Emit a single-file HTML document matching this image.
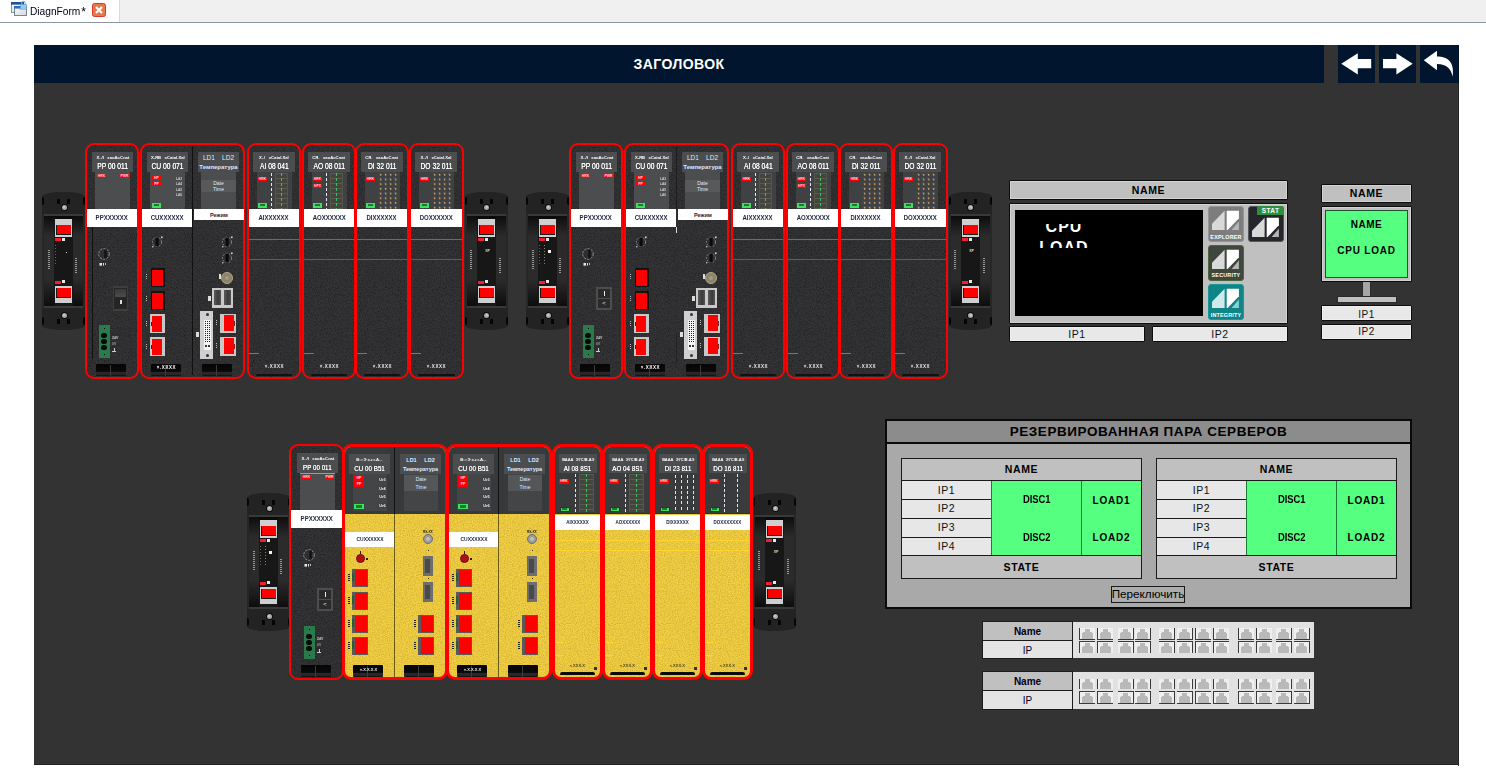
<!DOCTYPE html>
<html><head><meta charset="utf-8"><title>DiagnForm</title>
<style>
html,body{margin:0;padding:0;}
body{width:1486px;height:776px;position:relative;overflow:hidden;background:#fff;
font-family:"Liberation Sans",sans-serif;}
div{position:absolute;box-sizing:border-box;}
svg{position:absolute;overflow:visible;}
span{white-space:nowrap;}
</style></head><body>
<div style="left:0px;top:0px;width:1486px;height:22px;background:#f0f0f0;"></div>
<div style="left:0px;top:22px;width:1486px;height:1px;background:#8f979e;"></div>
<div style="left:0px;top:0px;width:119px;height:22px;background:#ffffff;"></div>
<div style="left:119px;top:0px;width:1px;height:22px;background:#d9d9d9;"></div>
<svg style="left:10px;top:1px" width="18" height="16" viewBox="0 0 18 16">
<defs><linearGradient id="wg" x1="0" y1="0" x2="1" y2="1"><stop offset="0" stop-color="#ffffff"/><stop offset="1" stop-color="#cfd6dc"/></linearGradient></defs>
<rect x="1.5" y="1.5" width="12" height="10" fill="url(#wg)" stroke="#8a939c" stroke-width="1"/>
<rect x="1" y="1" width="13" height="2.6" fill="#1b4f9c"/>
<rect x="4.5" y="5.5" width="12" height="9" fill="url(#wg)" stroke="#7b858f" stroke-width="1"/>
<rect x="4" y="5" width="13" height="2.6" fill="#2a6fc0"/>
<path d="M11.7 4 L11.7 2 Q11.7 0.3 13.4 0.3 Q15.1 0.3 15.1 2 L15.1 4" fill="none" stroke="#7fb4dc" stroke-width="1.1"/>
<rect x="10.6" y="3.6" width="5.8" height="4.6" fill="#9acbec" stroke="#5f9dcb" stroke-width="0.6"/>
</svg>
<div style="left:30px;top:1px;width:62px;height:20px;line-height:20px;font-size:11px;color:#000014;text-align:left;white-space:nowrap;"><span style="display:inline-block;transform:scaleX(0.925);transform-origin:0 50%;">DiagnForm<span style="font-size:13px;position:relative;top:0.5px;margin-left:1px">*</span></span></div>
<svg style="left:92px;top:3px" width="14" height="14" viewBox="0 0 14 14">
<rect x="0.5" y="0.5" width="13" height="13" rx="2" fill="#e4794a" stroke="#d9392b" stroke-width="1"/>
<path d="M4 4 L10 10 M10 4 L4 10" stroke="#fff" stroke-width="2.2" stroke-linecap="butt"/>
</svg>
<div style="left:34px;top:45px;width:1425px;height:720px;background:#333333;"></div>
<div style="left:1458px;top:45px;width:1px;height:721px;background:#242424;"></div>
<div style="left:34px;top:764px;width:1425px;height:1px;background:#242424;"></div>
<div style="left:34px;top:45px;width:1290px;height:38px;background:#01162e;"></div>
<div style="left:34px;top:45px;width:1290px;height:38px;line-height:38px;font-size:14px;color:#fff;text-align:center;white-space:nowrap;font-weight:bold;letter-spacing:0.45px;">ЗАГОЛОВОК</div>
<div style="left:1338px;top:45px;width:37px;height:38px;background:#01162e;"></div>
<div style="left:1379px;top:45px;width:37px;height:38px;background:#01162e;"></div>
<div style="left:1420px;top:45px;width:39px;height:38px;background:#01162e;"></div>
<svg style="left:1338px;top:45px" width="37" height="38" viewBox="0 0 37 38">
<path d="M3.3 18.8 L19.8 8.2 L19.8 13.9 L33.2 13.9 L33.2 23.3 L19.8 23.3 L19.8 29.4 Z" fill="#fff"/></svg>
<svg style="left:1379px;top:45px" width="37" height="38" viewBox="0 0 37 38">
<path d="M33.7 18.8 L17.4 8.2 L17.4 13.9 L4 13.9 L4 23.3 L17.4 23.3 L17.4 29.4 Z" fill="#fff"/></svg>
<svg style="left:1420px;top:45px" width="39" height="38" viewBox="0 0 39 38">
<path d="M3.8 15.3 L17 5.8 L17 11.5 C27 11.5 34.8 16 32.7 31.8 C31 24 27 19 17 19 L17 25.2 Z" fill="#fff"/></svg>
<svg width="0" height="0" style="left:0;top:0"><defs><filter id="nz" x="0" y="0" width="100%" height="100%"><feTurbulence type="fractalNoise" baseFrequency="0.85" numOctaves="2" seed="7"/><feColorMatrix type="matrix" values="0 0 0 0 0  0 0 0 0 0  0 0 0 0 0  0.9 0 0 0 -0.37"/></filter><filter id="nzy" x="0" y="0" width="100%" height="100%"><feTurbulence type="fractalNoise" baseFrequency="0.85" numOctaves="2" seed="11"/><feColorMatrix type="matrix" values="0 0 0 0 0  0 0 0 0 0  0 0 0 0 0  0.32 0 0 0 -0.12"/></filter></defs></svg>
<div style="left:42px;top:192px;width:43px;height:138px;background:#272727;border-radius:21px 21px 21px 21px / 5px 5px 5px 5px;"></div>
<div style="left:42px;top:192px;width:43px;height:22px;background:#232323;border-radius:21px 21px 0 0 / 5px 5px 0 0;"></div>
<div style="left:42px;top:308px;width:43px;height:22px;background:#232323;border-radius:0 0 21px 21px / 0 0 5px 5px;"></div>
<div style="left:44px;top:214px;width:39px;height:2px;background:#393939;"></div>
<div style="left:44px;top:306px;width:39px;height:2px;background:#393939;"></div>
<div style="left:44px;top:216px;width:10px;height:90px;background:linear-gradient(#0d0d0d 0,#2b2b2b 22%,#2b2b2b 70%,#0d0d0d 100%);"></div>
<div style="left:73px;top:216px;width:10px;height:90px;background:linear-gradient(#0d0d0d 0,#2b2b2b 22%,#2b2b2b 70%,#0d0d0d 100%);"></div>
<div style="left:54px;top:216px;width:19px;height:90px;background:#171717;"></div>
<div style="left:54px;top:216px;width:19px;height:3px;background:#0a0a0a;"></div>
<div style="left:42px;top:197px;width:2px;height:8px;background:#050505;border-radius:0 2px 2px 0;"></div>
<div style="left:83px;top:197px;width:2px;height:8px;background:#050505;border-radius:2px 0 0 2px;"></div>
<div style="left:42px;top:317px;width:2px;height:8px;background:#050505;border-radius:0 2px 2px 0;"></div>
<div style="left:83px;top:317px;width:2px;height:8px;background:#050505;border-radius:2px 0 0 2px;"></div>
<div style="left:57px;top:199px;width:3px;height:5px;background:#050505;"></div>
<div style="left:67px;top:199px;width:3px;height:5px;background:#050505;"></div>
<div style="left:57px;top:319px;width:3px;height:5px;background:#050505;"></div>
<div style="left:67px;top:319px;width:3px;height:5px;background:#050505;"></div>
<div style="left:60.5px;top:203.5px;width:7px;height:7px;background:#0c0c0c;border-radius:3.5px;"></div>
<div style="left:61.5px;top:204.5px;width:5px;height:5px;background:#aeaaac;border-radius:2.5px;"></div>
<div style="left:63px;top:205.5px;width:2px;height:2px;background:#d0cccf;border-radius:1px;"></div>
<div style="left:60.5px;top:311.5px;width:7px;height:7px;background:#0c0c0c;border-radius:3.5px;"></div>
<div style="left:61.5px;top:312.5px;width:5px;height:5px;background:#aeaaac;border-radius:2.5px;"></div>
<div style="left:63px;top:313.5px;width:2px;height:2px;background:#d0cccf;border-radius:1px;"></div>
<div style="left:55px;top:219px;width:17px;height:18px;background:#cfcfd1;"></div>
<div style="left:56px;top:225px;width:15px;height:10px;background:#1a1a1a;"></div>
<div style="left:57px;top:225px;width:14px;height:9px;background:#ff0000;"></div>
<div style="left:55px;top:286px;width:17px;height:17px;background:#cfcfd1;"></div>
<div style="left:56px;top:288px;width:15px;height:10px;background:#1a1a1a;"></div>
<div style="left:57px;top:288px;width:14px;height:9px;background:#ff0000;"></div>
<div style="left:55px;top:238px;width:6px;height:3px;background:#f02030;"></div>
<div style="left:62px;top:238px;width:3px;height:3px;background:#e8e8e8;"></div>
<div style="left:55px;top:281px;width:6px;height:3px;background:#f02030;"></div>
<div style="left:62px;top:280px;width:3px;height:3px;background:#e8e8e8;"></div>
<div style="left:48px;top:250px;width:2px;height:20px;background:repeating-linear-gradient(#9a9a9a 0 1px,transparent 1px 2px);"></div>
<div style="left:75px;top:258px;width:2px;height:16px;background:repeating-linear-gradient(#9a9a9a 0 1px,transparent 1px 2px);"></div>
<div style="left:55px;top:245px;width:1px;height:20px;background:repeating-linear-gradient(#6f6a58 0 1px,transparent 1px 3px);"></div>
<div style="left:66px;top:252px;width:1px;height:1px;background:#ddd;"></div>
<div style="left:85px;top:143px;width:54px;height:236px;background:#343436;border:2px solid #ff0000;border-radius:9px;overflow:hidden;"><svg style="left:0;top:0" width="50" height="232"><rect width="50" height="232" filter="url(#nz)"/></svg></div>
<div style="left:92px;top:152px;width:41px;height:20px;background:#4b4d4f;"></div>
<div style="left:92px;top:155px;width:41px;height:5px;line-height:5px;text-align:center;white-space:nowrap;font-size:8.4px;font-weight:bold;color:#ffffff;letter-spacing:0px;"><span style="display:inline-block;transform:scale(0.5);transform-origin:50% 50%;margin:0 -100px;">Х../l &nbsp; хаоАсСлаt</span></div>
<div style="left:88px;top:161px;width:49px;height:11px;line-height:11px;font-size:8.6px;color:#fff;text-align:center;white-space:nowrap;text-shadow:0 0 0.4px #fff;"><span style="display:inline-block;transform:scaleX(0.78);transform-origin:50% 50%;">PP 00 011</span></div>
<div style="left:95px;top:172px;width:35px;height:37px;background:#4b4d4f;"></div>
<div style="left:97px;top:174px;width:9px;height:4px;background:#ff0000;"></div>
<div style="left:97px;top:174px;width:9px;height:4px;line-height:4px;font-size:3.5px;color:#ffd0e0;text-align:center;white-space:nowrap;font-weight:bold;">HRK</div>
<div style="left:120px;top:174px;width:9px;height:4px;background:#ff0000;"></div>
<div style="left:120px;top:174px;width:9px;height:4px;line-height:4px;font-size:3.5px;color:#ffd0e0;text-align:center;white-space:nowrap;font-weight:bold;">PWR</div>
<div style="left:87px;top:209px;width:50px;height:18px;background:#ffffff;"></div>
<div style="left:87px;top:209px;width:50px;height:18px;line-height:18px;font-size:7px;color:#1c2340;text-align:center;white-space:nowrap;font-weight:bold;"><span style="display:inline-block;transform:scaleX(0.86);transform-origin:50% 50%;">PPXXXXXX</span></div>
<div style="left:92px;top:227px;width:1px;height:132px;background:#111;"></div>
<svg style="left:96px;top:246px" width="16" height="20" viewBox="0 0 16 20"><circle cx="8" cy="8" r="5.3" fill="none" stroke="#a8a8a8" stroke-width="0.8" stroke-dasharray="2.2 1.2"/><rect x="8.3" y="3.5" width="2.4" height="9" rx="1" fill="#111"/><rect x="3.5" y="17" width="2.5" height="2.6" fill="#e8e8e8"/><rect x="7" y="17" width="1" height="2.6" fill="#ddd"/><rect x="9" y="17" width="1" height="2" fill="#bbb"/></svg>
<div style="left:113px;top:286px;width:15px;height:25px;background:#262626;border:1px solid #3c3c3c;border-top:2px solid #3e3e3e;border-bottom:2px solid #3e3e3e;"></div>
<div style="left:115px;top:289px;width:11px;height:8px;background:linear-gradient(#3a3a3a,#4c4c4c);"></div>
<div style="left:115px;top:298px;width:11px;height:9px;background:#242424;"></div>
<div style="left:120px;top:300px;width:2px;height:4px;background:#ddd;"></div>
<div style="left:99px;top:325px;width:11px;height:33px;background:#2b7a4b;"></div>
<div style="left:101px;top:333px;width:6px;height:5px;background:#0a0a0a;border-radius:3px;"></div>
<div style="left:101px;top:339px;width:6px;height:5px;background:#0a0a0a;border-radius:3px;"></div>
<div style="left:101px;top:345px;width:6px;height:5px;background:#0a0a0a;border-radius:3px;"></div>
<div style="left:104px;top:328px;width:1px;height:1px;background:#0a0a0a;"></div>
<div style="left:104px;top:354px;width:1px;height:1px;background:#0a0a0a;"></div>
<div style="left:112px;top:335px;width:8px;height:5px;line-height:5px;text-align:left;white-space:nowrap;font-size:7.0px;font-weight:bold;color:#ccc;letter-spacing:0px;"><span style="display:inline-block;transform:scale(0.5);transform-origin:0 50%;">24V</span></div>
<div style="left:112px;top:341px;width:8px;height:5px;line-height:5px;text-align:left;white-space:nowrap;font-size:7.0px;font-weight:bold;color:#999;letter-spacing:0px;"><span style="display:inline-block;transform:scale(0.5);transform-origin:0 50%;">0V</span></div>
<div style="left:112px;top:351px;width:4px;height:1px;background:#ccc;"></div>
<div style="left:113.5px;top:348px;width:1px;height:3px;background:#ccc;"></div>
<div style="left:96px;top:364px;width:30px;height:12px;background:linear-gradient(#050505 0,#0a0a0a 62%,#2a2a2a 70%,#242424 90%,#0a0a0a 100%);border-radius:1px;"></div>
<div style="left:110px;top:365px;width:1px;height:11px;background:#3c3c3c;"></div>
<div style="left:140px;top:143px;width:105px;height:236px;background:#343436;border:2px solid #ff0000;border-radius:9px;overflow:hidden;"><svg style="left:0;top:0" width="101" height="232"><rect width="101" height="232" filter="url(#nz)"/></svg></div>
<div style="left:192px;top:147px;width:1px;height:228px;background:#111;"></div>
<div style="left:147px;top:152px;width:41px;height:20px;background:#4b4d4f;"></div>
<div style="left:147px;top:155px;width:41px;height:5px;line-height:5px;text-align:center;white-space:nowrap;font-size:8.4px;font-weight:bold;color:#ffffff;letter-spacing:0px;"><span style="display:inline-block;transform:scale(0.5);transform-origin:50% 50%;margin:0 -100px;">Х-ЯВ &nbsp; хСаtаl.Хаl</span></div>
<div style="left:143px;top:161px;width:49px;height:11px;line-height:11px;font-size:8.6px;color:#fff;text-align:center;white-space:nowrap;text-shadow:0 0 0.4px #fff;"><span style="display:inline-block;transform:scaleX(0.78);transform-origin:50% 50%;">CU 00 071</span></div>
<div style="left:150px;top:172px;width:35px;height:37px;background:#4b4d4f;"></div>
<div style="left:152px;top:176px;width:9px;height:4px;background:#ff0000;"></div>
<div style="left:152px;top:176px;width:9px;height:4px;line-height:4px;font-size:3.5px;color:#ffd0e0;text-align:center;white-space:nowrap;font-weight:bold;">HP</div>
<div style="left:152px;top:182px;width:9px;height:4px;background:#ff0000;"></div>
<div style="left:152px;top:182px;width:9px;height:4px;line-height:4px;font-size:3.5px;color:#ffd0e0;text-align:center;white-space:nowrap;font-weight:bold;">PP</div>
<div style="left:152px;top:203px;width:9px;height:5px;background:#3fe060;"></div>
<div style="left:154px;top:204px;width:5px;height:2px;background:#1a7a30;"></div>
<div style="left:174px;top:176px;width:10px;height:5px;line-height:5px;text-align:center;white-space:nowrap;font-size:6.4px;font-weight:bold;color:#d0d0d0;letter-spacing:0px;"><span style="display:inline-block;transform:scale(0.5);transform-origin:50% 50%;margin:0 -100px;">LA3</span></div>
<div style="left:174px;top:181px;width:10px;height:5px;line-height:5px;text-align:center;white-space:nowrap;font-size:6.4px;font-weight:bold;color:#d0d0d0;letter-spacing:0px;"><span style="display:inline-block;transform:scale(0.5);transform-origin:50% 50%;margin:0 -100px;">LA4</span></div>
<div style="left:174px;top:187px;width:10px;height:5px;line-height:5px;text-align:center;white-space:nowrap;font-size:6.4px;font-weight:bold;color:#d0d0d0;letter-spacing:0px;"><span style="display:inline-block;transform:scale(0.5);transform-origin:50% 50%;margin:0 -100px;">LA5</span></div>
<div style="left:174px;top:192px;width:10px;height:5px;line-height:5px;text-align:center;white-space:nowrap;font-size:6.4px;font-weight:bold;color:#d0d0d0;letter-spacing:0px;"><span style="display:inline-block;transform:scale(0.5);transform-origin:50% 50%;margin:0 -100px;">LA6</span></div>
<div style="left:142px;top:209px;width:50px;height:18px;background:#ffffff;"></div>
<div style="left:142px;top:209px;width:50px;height:18px;line-height:18px;font-size:7px;color:#1c2340;text-align:center;white-space:nowrap;font-weight:bold;"><span style="display:inline-block;transform:scaleX(0.86);transform-origin:50% 50%;">CUXXXXXX</span></div>
<div style="left:198px;top:152px;width:41px;height:20px;background:#4b4d4f;"></div>
<div style="left:198px;top:153px;width:41px;height:9px;line-height:9px;font-size:6.5px;color:#dfe8ff;text-align:center;white-space:nowrap;">LD1 &nbsp;&nbsp; LD2</div>
<div style="left:196px;top:163px;width:45px;height:9px;line-height:9px;font-size:6px;color:#dfe8ff;text-align:center;white-space:nowrap;font-weight:bold;"><span style="display:inline-block;transform:scaleX(1.0);transform-origin:50% 50%;">Температура</span></div>
<div style="left:201px;top:172px;width:35px;height:37px;background:#4b4d4f;"></div>
<div style="left:201px;top:180px;width:35px;height:12px;background:#57595b;"></div>
<div style="left:201px;top:180px;width:35px;height:6px;line-height:6px;font-size:5px;color:#dfe8ff;text-align:center;white-space:nowrap;">Date</div>
<div style="left:201px;top:186px;width:35px;height:6px;line-height:6px;font-size:5px;color:#dfe8ff;text-align:center;white-space:nowrap;">Time</div>
<div style="left:194px;top:209px;width:50px;height:11px;background:#fff;"></div>
<div style="left:194px;top:210px;width:50px;height:11px;line-height:11px;font-size:5.5px;color:#1c2340;text-align:center;white-space:nowrap;font-weight:bold;">Режим</div>
<svg style="left:150px;top:235px" width="14" height="14" viewBox="0 0 14 14"><circle cx="7" cy="7" r="4.6" fill="none" stroke="#9a9a9a" stroke-width="0.8" stroke-dasharray="2 1.3"/><rect x="5.6" y="2.6" width="3" height="8.8" rx="1" fill="#0a0a0a"/><rect x="11" y="1.5" width="1.6" height="1.6" fill="#ddd"/><rect x="2" y="11" width="1.4" height="1.4" fill="#bbb"/></svg>
<div style="left:151px;top:268px;width:14px;height:19px;background:#121212;"></div>
<div style="left:152px;top:270px;width:11px;height:16px;background:#ff0000;"></div>
<div style="left:151px;top:291px;width:14px;height:19px;background:#121212;"></div>
<div style="left:152px;top:293px;width:11px;height:16px;background:#ff0000;"></div>
<div style="left:150px;top:314px;width:15px;height:19px;background:#c8c8c8;"></div>
<div style="left:152px;top:316px;width:10px;height:16px;background:#ff0000;"></div>
<div style="left:151px;top:322px;width:1px;height:4px;background:#2a2a2a;"></div>
<div style="left:150px;top:337px;width:15px;height:19px;background:#c8c8c8;"></div>
<div style="left:152px;top:339px;width:10px;height:16px;background:#ff0000;"></div>
<div style="left:151px;top:345px;width:1px;height:4px;background:#2a2a2a;"></div>
<div style="left:146px;top:274px;width:1px;height:5px;background:repeating-linear-gradient(#bbb 0 1px,transparent 1px 2px);"></div>
<div style="left:146px;top:296px;width:1px;height:5px;background:repeating-linear-gradient(#bbb 0 1px,transparent 1px 2px);"></div>
<div style="left:146px;top:321px;width:1px;height:5px;background:repeating-linear-gradient(#bbb 0 1px,transparent 1px 2px);"></div>
<div style="left:146px;top:344px;width:1px;height:5px;background:repeating-linear-gradient(#bbb 0 1px,transparent 1px 2px);"></div>
<div style="left:151px;top:364px;width:30px;height:12px;background:linear-gradient(#050505 0,#0a0a0a 62%,#2a2a2a 70%,#242424 90%,#0a0a0a 100%);border-radius:1px;"></div>
<div style="left:165px;top:365px;width:1px;height:11px;background:#3c3c3c;"></div>
<div style="left:151px;top:365px;width:30px;height:5px;line-height:5px;text-align:center;white-space:nowrap;font-size:9.0px;font-weight:bold;color:#fff;letter-spacing:1.2px;"><span style="display:inline-block;transform:scale(0.5);transform-origin:50% 50%;margin:0 -100px;">×.XXXX</span></div>
<svg style="left:220px;top:235px" width="14" height="14" viewBox="0 0 14 14"><circle cx="7" cy="7" r="4.6" fill="none" stroke="#9a9a9a" stroke-width="0.8" stroke-dasharray="2 1.3"/><rect x="5.6" y="2.6" width="3" height="8.8" rx="1" fill="#0a0a0a"/><rect x="11" y="1.5" width="1.6" height="1.6" fill="#ddd"/><rect x="2" y="11" width="1.4" height="1.4" fill="#bbb"/></svg>
<svg style="left:220px;top:251px" width="14" height="14" viewBox="0 0 14 14"><circle cx="7" cy="7" r="4.6" fill="none" stroke="#9a9a9a" stroke-width="0.8" stroke-dasharray="2 1.3"/><rect x="5.6" y="2.6" width="3" height="8.8" rx="1" fill="#0a0a0a"/><rect x="11" y="1.5" width="1.6" height="1.6" fill="#ddd"/><rect x="2" y="11" width="1.4" height="1.4" fill="#bbb"/></svg>
<div style="left:221px;top:272px;width:12px;height:12px;background:#8c8468;border-radius:6px;border:1.5px solid #b3a77f;"></div>
<div style="left:225px;top:276px;width:4px;height:4px;background:#9a9a9a;border-radius:2px;"></div>
<div style="left:219px;top:274px;width:2px;height:5px;background:#ddd;"></div>
<div style="left:212px;top:288px;width:21px;height:20px;background:#c9c9c9;"></div>
<div style="left:214px;top:290px;width:7px;height:15px;background:linear-gradient(90deg,#5a5a5a,#3a3a3a 60%,#555);"></div>
<div style="left:224px;top:290px;width:7px;height:15px;background:linear-gradient(90deg,#5a5a5a,#3a3a3a 60%,#555);"></div>
<div style="left:208px;top:296px;width:3px;height:5px;background:#ddd;"></div>
<div style="left:200px;top:311px;width:13px;height:48px;background:#cfcfcf;"></div>
<div style="left:204px;top:320px;width:7px;height:30px;background:#f4f4f4;border-radius:1px;"></div>
<div style="left:205px;top:321px;width:5px;height:22px;background:repeating-linear-gradient(#222 0 1px,transparent 1px 2px);-webkit-mask:repeating-linear-gradient(90deg,#000 0 1px,transparent 1px 2px);mask:repeating-linear-gradient(90deg,#000 0 1px,transparent 1px 2px);"></div>
<div style="left:205px;top:345px;width:2px;height:2px;background:#333;"></div>
<div style="left:208px;top:345px;width:2px;height:2px;background:#333;"></div>
<div style="left:206px;top:313px;width:3px;height:3px;background:#333;border-radius:2px;"></div>
<div style="left:206px;top:354px;width:3px;height:3px;background:#333;border-radius:2px;"></div>
<div style="left:196px;top:332px;width:3px;height:5px;background:#ddd;"></div>
<div style="left:220px;top:314px;width:16px;height:19px;background:#c8c8c8;"></div>
<div style="left:224px;top:315px;width:10px;height:16px;background:#ff0000;"></div>
<div style="left:234px;top:321px;width:1px;height:5px;background:#802020;"></div>
<div style="left:220px;top:337px;width:16px;height:19px;background:#c8c8c8;"></div>
<div style="left:224px;top:338px;width:10px;height:16px;background:#ff0000;"></div>
<div style="left:234px;top:344px;width:1px;height:5px;background:#802020;"></div>
<div style="left:216px;top:320px;width:1px;height:6px;background:repeating-linear-gradient(#bbb 0 1px,transparent 1px 2px);"></div>
<div style="left:216px;top:343px;width:1px;height:6px;background:repeating-linear-gradient(#bbb 0 1px,transparent 1px 2px);"></div>
<div style="left:202px;top:364px;width:30px;height:12px;background:linear-gradient(#050505 0,#0a0a0a 62%,#2a2a2a 70%,#242424 90%,#0a0a0a 100%);border-radius:1px;"></div>
<div style="left:216px;top:365px;width:1px;height:11px;background:#3c3c3c;"></div>
<div style="left:247px;top:143px;width:54px;height:236px;background:#343436;border:2px solid #ff0000;border-radius:9px;overflow:hidden;"><svg style="left:0;top:0" width="50" height="232"><rect width="50" height="232" filter="url(#nz)"/></svg></div>
<div style="left:253px;top:152px;width:42px;height:20px;background:#4b4d4f;"></div>
<div style="left:253px;top:155px;width:42px;height:5px;line-height:5px;text-align:center;white-space:nowrap;font-size:8.4px;font-weight:bold;color:#ffffff;letter-spacing:0px;"><span style="display:inline-block;transform:scale(0.5);transform-origin:50% 50%;margin:0 -100px;">Х../ &nbsp; хСаtаl.Хаl</span></div>
<div style="left:249px;top:161px;width:50px;height:11px;line-height:11px;font-size:8.6px;color:#fff;text-align:center;white-space:nowrap;text-shadow:0 0 0.4px #fff;"><span style="display:inline-block;transform:scaleX(0.78);transform-origin:50% 50%;">AI 08 041</span></div>
<div style="left:257px;top:172px;width:35px;height:37px;background:#3f4142;"></div>
<div style="left:258px;top:177px;width:9px;height:4px;background:#ff0000;"></div>
<div style="left:258px;top:177px;width:9px;height:4px;line-height:4px;font-size:3.5px;color:#ffd0e0;text-align:center;white-space:nowrap;font-weight:bold;">HRK</div>
<div style="left:258px;top:203px;width:9px;height:5px;background:#3fe060;"></div>
<div style="left:260px;top:204px;width:5px;height:2px;background:#1a7a30;"></div>
<div style="left:271px;top:173px;width:1px;height:36px;background:repeating-linear-gradient(#e6e6f4 0 3px,transparent 3px 5px);"></div>
<div style="left:275px;top:173px;width:13px;height:36px;border-left:1px solid #55554a;border-right:1px solid #55554a;background:repeating-linear-gradient(#5a5a4e 0 1px,#44453e 1px 5px);"></div>
<div style="left:281px;top:173px;width:1px;height:36px;background:repeating-linear-gradient(#3fc060 0 3px,transparent 3px 5px);"></div>
<div style="left:249px;top:209px;width:50px;height:18px;background:#ffffff;"></div>
<div style="left:249px;top:209px;width:50px;height:18px;line-height:18px;font-size:7px;color:#1c2340;text-align:center;white-space:nowrap;font-weight:bold;"><span style="display:inline-block;transform:scaleX(0.86);transform-origin:50% 50%;">AIXXXXXX</span></div>
<div style="left:249px;top:239px;width:50px;height:1px;background:#6c6c6c;"></div>
<div style="left:249px;top:259px;width:50px;height:1px;background:#5c5c5c;"></div>
<div style="left:249px;top:353px;width:10px;height:1px;background:#777;"></div>
<div style="left:257px;top:364px;width:34px;height:5px;line-height:5px;text-align:center;white-space:nowrap;font-size:9.0px;font-weight:bold;color:#e8e8e8;letter-spacing:1.2px;"><span style="display:inline-block;transform:scale(0.5);transform-origin:50% 50%;margin:0 -100px;">×.XXXX</span></div>
<div style="left:256px;top:374px;width:36px;height:2px;background:#111;border-radius:2px;"></div>
<div style="left:302px;top:143px;width:54px;height:236px;background:#343436;border:2px solid #ff0000;border-radius:9px;overflow:hidden;"><svg style="left:0;top:0" width="50" height="232"><rect width="50" height="232" filter="url(#nz)"/></svg></div>
<div style="left:308px;top:152px;width:42px;height:20px;background:#4b4d4f;"></div>
<div style="left:308px;top:155px;width:42px;height:5px;line-height:5px;text-align:center;white-space:nowrap;font-size:8.4px;font-weight:bold;color:#ffffff;letter-spacing:0px;"><span style="display:inline-block;transform:scale(0.5);transform-origin:50% 50%;margin:0 -100px;">СЯ. &nbsp; хаоАсСлаt</span></div>
<div style="left:304px;top:161px;width:50px;height:11px;line-height:11px;font-size:8.6px;color:#fff;text-align:center;white-space:nowrap;text-shadow:0 0 0.4px #fff;"><span style="display:inline-block;transform:scaleX(0.78);transform-origin:50% 50%;">AO 08 011</span></div>
<div style="left:312px;top:172px;width:35px;height:37px;background:#3f4142;"></div>
<div style="left:313px;top:177px;width:9px;height:4px;background:#ff0000;"></div>
<div style="left:313px;top:177px;width:9px;height:4px;line-height:4px;font-size:3.5px;color:#ffd0e0;text-align:center;white-space:nowrap;font-weight:bold;">HRK</div>
<div style="left:313px;top:184px;width:9px;height:4px;background:#ff0000;"></div>
<div style="left:313px;top:184px;width:9px;height:4px;line-height:4px;font-size:3.5px;color:#ffd0e0;text-align:center;white-space:nowrap;font-weight:bold;">HPX</div>
<div style="left:313px;top:203px;width:9px;height:5px;background:#3fe060;"></div>
<div style="left:315px;top:204px;width:5px;height:2px;background:#1a7a30;"></div>
<div style="left:326px;top:173px;width:1px;height:36px;background:repeating-linear-gradient(#e6e6f4 0 3px,transparent 3px 5px);"></div>
<div style="left:330px;top:173px;width:13px;height:36px;border-left:1px solid #55554a;border-right:1px solid #55554a;background:repeating-linear-gradient(#5a5a4e 0 1px,#44453e 1px 5px);"></div>
<div style="left:336px;top:173px;width:1px;height:36px;background:repeating-linear-gradient(#3fc060 0 3px,transparent 3px 5px);"></div>
<div style="left:304px;top:209px;width:50px;height:18px;background:#ffffff;"></div>
<div style="left:304px;top:209px;width:50px;height:18px;line-height:18px;font-size:7px;color:#1c2340;text-align:center;white-space:nowrap;font-weight:bold;"><span style="display:inline-block;transform:scaleX(0.86);transform-origin:50% 50%;">AOXXXXXX</span></div>
<div style="left:304px;top:239px;width:50px;height:1px;background:#6c6c6c;"></div>
<div style="left:304px;top:259px;width:50px;height:1px;background:#5c5c5c;"></div>
<div style="left:304px;top:353px;width:10px;height:1px;background:#777;"></div>
<div style="left:312px;top:364px;width:34px;height:5px;line-height:5px;text-align:center;white-space:nowrap;font-size:9.0px;font-weight:bold;color:#e8e8e8;letter-spacing:1.2px;"><span style="display:inline-block;transform:scale(0.5);transform-origin:50% 50%;margin:0 -100px;">×.XXXX</span></div>
<div style="left:311px;top:374px;width:36px;height:2px;background:#111;border-radius:2px;"></div>
<div style="left:355px;top:143px;width:54px;height:236px;background:#343436;border:2px solid #ff0000;border-radius:9px;overflow:hidden;"><svg style="left:0;top:0" width="50" height="232"><rect width="50" height="232" filter="url(#nz)"/></svg></div>
<div style="left:361px;top:152px;width:42px;height:20px;background:#4b4d4f;"></div>
<div style="left:361px;top:155px;width:42px;height:5px;line-height:5px;text-align:center;white-space:nowrap;font-size:8.4px;font-weight:bold;color:#ffffff;letter-spacing:0px;"><span style="display:inline-block;transform:scale(0.5);transform-origin:50% 50%;margin:0 -100px;">СЯ. &nbsp; хаоАсСлаt</span></div>
<div style="left:357px;top:161px;width:50px;height:11px;line-height:11px;font-size:8.6px;color:#fff;text-align:center;white-space:nowrap;text-shadow:0 0 0.4px #fff;"><span style="display:inline-block;transform:scaleX(0.78);transform-origin:50% 50%;">DI 32 011</span></div>
<div style="left:365px;top:172px;width:35px;height:37px;background:#3f4142;"></div>
<div style="left:366px;top:177px;width:9px;height:4px;background:#ff0000;"></div>
<div style="left:366px;top:177px;width:9px;height:4px;line-height:4px;font-size:3.5px;color:#ffd0e0;text-align:center;white-space:nowrap;font-weight:bold;">HRK</div>
<div style="left:366px;top:203px;width:9px;height:5px;background:#3fe060;"></div>
<div style="left:368px;top:204px;width:5px;height:2px;background:#1a7a30;"></div>
<svg style="left:379px;top:173px" width="20" height="37" viewBox="0 0 20 37"><defs><pattern id="dots355_143" width="5" height="4.7" patternUnits="userSpaceOnUse"><rect x="1" y="1" width="1.4" height="1.6" fill="#dca24c"/><rect x="0.6" y="0.6" width="0.8" height="0.8" fill="#7f9fe0"/></pattern></defs><rect x="0" y="0" width="20" height="36" fill="url(#dots355_143)"/></svg>
<div style="left:357px;top:209px;width:50px;height:18px;background:#ffffff;"></div>
<div style="left:357px;top:209px;width:50px;height:18px;line-height:18px;font-size:7px;color:#1c2340;text-align:center;white-space:nowrap;font-weight:bold;"><span style="display:inline-block;transform:scaleX(0.86);transform-origin:50% 50%;">DIXXXXXX</span></div>
<div style="left:357px;top:239px;width:50px;height:1px;background:#6c6c6c;"></div>
<div style="left:357px;top:259px;width:50px;height:1px;background:#5c5c5c;"></div>
<div style="left:357px;top:353px;width:10px;height:1px;background:#777;"></div>
<div style="left:365px;top:364px;width:34px;height:5px;line-height:5px;text-align:center;white-space:nowrap;font-size:9.0px;font-weight:bold;color:#e8e8e8;letter-spacing:1.2px;"><span style="display:inline-block;transform:scale(0.5);transform-origin:50% 50%;margin:0 -100px;">×.XXXX</span></div>
<div style="left:364px;top:374px;width:36px;height:2px;background:#111;border-radius:2px;"></div>
<div style="left:409px;top:143px;width:55px;height:236px;background:#343436;border:2px solid #ff0000;border-radius:9px;overflow:hidden;"><svg style="left:0;top:0" width="51" height="232"><rect width="51" height="232" filter="url(#nz)"/></svg></div>
<div style="left:415px;top:152px;width:42px;height:20px;background:#4b4d4f;"></div>
<div style="left:415px;top:155px;width:42px;height:5px;line-height:5px;text-align:center;white-space:nowrap;font-size:8.4px;font-weight:bold;color:#ffffff;letter-spacing:0px;"><span style="display:inline-block;transform:scale(0.5);transform-origin:50% 50%;margin:0 -100px;">Х../l &nbsp; хСаtаl.Хаl</span></div>
<div style="left:411px;top:161px;width:50px;height:11px;line-height:11px;font-size:8.6px;color:#fff;text-align:center;white-space:nowrap;text-shadow:0 0 0.4px #fff;"><span style="display:inline-block;transform:scaleX(0.78);transform-origin:50% 50%;">DO 32 011</span></div>
<div style="left:419px;top:172px;width:35px;height:37px;background:#3f4142;"></div>
<div style="left:420px;top:177px;width:9px;height:4px;background:#ff0000;"></div>
<div style="left:420px;top:177px;width:9px;height:4px;line-height:4px;font-size:3.5px;color:#ffd0e0;text-align:center;white-space:nowrap;font-weight:bold;">HRK</div>
<div style="left:420px;top:203px;width:9px;height:5px;background:#3fe060;"></div>
<div style="left:422px;top:204px;width:5px;height:2px;background:#1a7a30;"></div>
<svg style="left:433px;top:173px" width="20" height="37" viewBox="0 0 20 37"><defs><pattern id="dots409_143" width="5" height="4.7" patternUnits="userSpaceOnUse"><rect x="1" y="1" width="1.4" height="1.6" fill="#dca24c"/><rect x="0.6" y="0.6" width="0.8" height="0.8" fill="#7f9fe0"/></pattern></defs><rect x="0" y="0" width="20" height="36" fill="url(#dots409_143)"/></svg>
<div style="left:411px;top:209px;width:51px;height:18px;background:#ffffff;"></div>
<div style="left:411px;top:209px;width:51px;height:18px;line-height:18px;font-size:7px;color:#1c2340;text-align:center;white-space:nowrap;font-weight:bold;"><span style="display:inline-block;transform:scaleX(0.86);transform-origin:50% 50%;">DOXXXXXX</span></div>
<div style="left:411px;top:239px;width:51px;height:1px;background:#6c6c6c;"></div>
<div style="left:411px;top:259px;width:51px;height:1px;background:#5c5c5c;"></div>
<div style="left:411px;top:353px;width:10px;height:1px;background:#777;"></div>
<div style="left:419px;top:364px;width:34px;height:5px;line-height:5px;text-align:center;white-space:nowrap;font-size:9.0px;font-weight:bold;color:#e8e8e8;letter-spacing:1.2px;"><span style="display:inline-block;transform:scale(0.5);transform-origin:50% 50%;margin:0 -100px;">×.XXXX</span></div>
<div style="left:418px;top:374px;width:37px;height:2px;background:#111;border-radius:2px;"></div>
<div style="left:464.5px;top:192px;width:43px;height:138px;background:#272727;border-radius:21px 21px 21px 21px / 5px 5px 5px 5px;"></div>
<div style="left:464.5px;top:192px;width:43px;height:22px;background:#232323;border-radius:21px 21px 0 0 / 5px 5px 0 0;"></div>
<div style="left:464.5px;top:308px;width:43px;height:22px;background:#232323;border-radius:0 0 21px 21px / 0 0 5px 5px;"></div>
<div style="left:466.5px;top:214px;width:39px;height:2px;background:#393939;"></div>
<div style="left:466.5px;top:306px;width:39px;height:2px;background:#393939;"></div>
<div style="left:466.5px;top:216px;width:10px;height:90px;background:linear-gradient(#0d0d0d 0,#2b2b2b 22%,#2b2b2b 70%,#0d0d0d 100%);"></div>
<div style="left:495.5px;top:216px;width:10px;height:90px;background:linear-gradient(#0d0d0d 0,#2b2b2b 22%,#2b2b2b 70%,#0d0d0d 100%);"></div>
<div style="left:476.5px;top:216px;width:19px;height:90px;background:#171717;"></div>
<div style="left:476.5px;top:216px;width:19px;height:3px;background:#0a0a0a;"></div>
<div style="left:464.5px;top:197px;width:2px;height:8px;background:#050505;border-radius:0 2px 2px 0;"></div>
<div style="left:505.5px;top:197px;width:2px;height:8px;background:#050505;border-radius:2px 0 0 2px;"></div>
<div style="left:464.5px;top:317px;width:2px;height:8px;background:#050505;border-radius:0 2px 2px 0;"></div>
<div style="left:505.5px;top:317px;width:2px;height:8px;background:#050505;border-radius:2px 0 0 2px;"></div>
<div style="left:479.5px;top:199px;width:3px;height:5px;background:#050505;"></div>
<div style="left:489.5px;top:199px;width:3px;height:5px;background:#050505;"></div>
<div style="left:479.5px;top:319px;width:3px;height:5px;background:#050505;"></div>
<div style="left:489.5px;top:319px;width:3px;height:5px;background:#050505;"></div>
<div style="left:483.0px;top:203.5px;width:7px;height:7px;background:#0c0c0c;border-radius:3.5px;"></div>
<div style="left:484.0px;top:204.5px;width:5px;height:5px;background:#aeaaac;border-radius:2.5px;"></div>
<div style="left:485.5px;top:205.5px;width:2px;height:2px;background:#d0cccf;border-radius:1px;"></div>
<div style="left:483.0px;top:311.5px;width:7px;height:7px;background:#0c0c0c;border-radius:3.5px;"></div>
<div style="left:484.0px;top:312.5px;width:5px;height:5px;background:#aeaaac;border-radius:2.5px;"></div>
<div style="left:485.5px;top:313.5px;width:2px;height:2px;background:#d0cccf;border-radius:1px;"></div>
<div style="left:477.5px;top:219px;width:17px;height:18px;background:#cfcfd1;"></div>
<div style="left:478.5px;top:225px;width:15px;height:10px;background:#1a1a1a;"></div>
<div style="left:479.5px;top:225px;width:14px;height:9px;background:#ff0000;"></div>
<div style="left:477.5px;top:286px;width:17px;height:17px;background:#cfcfd1;"></div>
<div style="left:478.5px;top:288px;width:15px;height:10px;background:#1a1a1a;"></div>
<div style="left:479.5px;top:288px;width:14px;height:9px;background:#ff0000;"></div>
<div style="left:477.5px;top:238px;width:6px;height:3px;background:#f02030;"></div>
<div style="left:484.5px;top:238px;width:3px;height:3px;background:#e8e8e8;"></div>
<div style="left:477.5px;top:281px;width:6px;height:3px;background:#f02030;"></div>
<div style="left:484.5px;top:280px;width:3px;height:3px;background:#e8e8e8;"></div>
<div style="left:469.5px;top:250px;width:2px;height:20px;background:repeating-linear-gradient(#9a9a9a 0 1px,transparent 1px 2px);"></div>
<div style="left:498.5px;top:258px;width:2px;height:16px;background:repeating-linear-gradient(#9a9a9a 0 1px,transparent 1px 2px);"></div>
<div style="left:482.5px;top:249px;width:10px;height:5px;line-height:5px;font-size:3.5px;color:#ddd;text-align:center;white-space:nowrap;font-weight:bold;">XP</div>
<div style="left:526px;top:192px;width:43px;height:138px;background:#272727;border-radius:21px 21px 21px 21px / 5px 5px 5px 5px;"></div>
<div style="left:526px;top:192px;width:43px;height:22px;background:#232323;border-radius:21px 21px 0 0 / 5px 5px 0 0;"></div>
<div style="left:526px;top:308px;width:43px;height:22px;background:#232323;border-radius:0 0 21px 21px / 0 0 5px 5px;"></div>
<div style="left:528px;top:214px;width:39px;height:2px;background:#393939;"></div>
<div style="left:528px;top:306px;width:39px;height:2px;background:#393939;"></div>
<div style="left:528px;top:216px;width:10px;height:90px;background:linear-gradient(#0d0d0d 0,#2b2b2b 22%,#2b2b2b 70%,#0d0d0d 100%);"></div>
<div style="left:557px;top:216px;width:10px;height:90px;background:linear-gradient(#0d0d0d 0,#2b2b2b 22%,#2b2b2b 70%,#0d0d0d 100%);"></div>
<div style="left:538px;top:216px;width:19px;height:90px;background:#171717;"></div>
<div style="left:538px;top:216px;width:19px;height:3px;background:#0a0a0a;"></div>
<div style="left:526px;top:197px;width:2px;height:8px;background:#050505;border-radius:0 2px 2px 0;"></div>
<div style="left:567px;top:197px;width:2px;height:8px;background:#050505;border-radius:2px 0 0 2px;"></div>
<div style="left:526px;top:317px;width:2px;height:8px;background:#050505;border-radius:0 2px 2px 0;"></div>
<div style="left:567px;top:317px;width:2px;height:8px;background:#050505;border-radius:2px 0 0 2px;"></div>
<div style="left:541px;top:199px;width:3px;height:5px;background:#050505;"></div>
<div style="left:551px;top:199px;width:3px;height:5px;background:#050505;"></div>
<div style="left:541px;top:319px;width:3px;height:5px;background:#050505;"></div>
<div style="left:551px;top:319px;width:3px;height:5px;background:#050505;"></div>
<div style="left:544.5px;top:203.5px;width:7px;height:7px;background:#0c0c0c;border-radius:3.5px;"></div>
<div style="left:545.5px;top:204.5px;width:5px;height:5px;background:#aeaaac;border-radius:2.5px;"></div>
<div style="left:547px;top:205.5px;width:2px;height:2px;background:#d0cccf;border-radius:1px;"></div>
<div style="left:544.5px;top:311.5px;width:7px;height:7px;background:#0c0c0c;border-radius:3.5px;"></div>
<div style="left:545.5px;top:312.5px;width:5px;height:5px;background:#aeaaac;border-radius:2.5px;"></div>
<div style="left:547px;top:313.5px;width:2px;height:2px;background:#d0cccf;border-radius:1px;"></div>
<div style="left:539px;top:219px;width:17px;height:18px;background:#cfcfd1;"></div>
<div style="left:540px;top:225px;width:15px;height:10px;background:#1a1a1a;"></div>
<div style="left:541px;top:225px;width:14px;height:9px;background:#ff0000;"></div>
<div style="left:539px;top:286px;width:17px;height:17px;background:#cfcfd1;"></div>
<div style="left:540px;top:288px;width:15px;height:10px;background:#1a1a1a;"></div>
<div style="left:541px;top:288px;width:14px;height:9px;background:#ff0000;"></div>
<div style="left:539px;top:238px;width:6px;height:3px;background:#f02030;"></div>
<div style="left:546px;top:238px;width:3px;height:3px;background:#e8e8e8;"></div>
<div style="left:539px;top:281px;width:6px;height:3px;background:#f02030;"></div>
<div style="left:546px;top:280px;width:3px;height:3px;background:#e8e8e8;"></div>
<div style="left:532px;top:250px;width:2px;height:20px;background:repeating-linear-gradient(#9a9a9a 0 1px,transparent 1px 2px);"></div>
<div style="left:559px;top:258px;width:2px;height:16px;background:repeating-linear-gradient(#9a9a9a 0 1px,transparent 1px 2px);"></div>
<div style="left:539px;top:245px;width:1px;height:20px;background:repeating-linear-gradient(#6f6a58 0 1px,transparent 1px 3px);"></div>
<div style="left:548px;top:250px;width:3px;height:3px;background:#f4f4f4;"></div>
<div style="left:544px;top:245px;width:1px;height:20px;background:repeating-linear-gradient(#8a8468 0 1px,transparent 1px 3px);"></div>
<div style="left:569px;top:143px;width:54px;height:236px;background:#343436;border:2px solid #ff0000;border-radius:9px;overflow:hidden;"><svg style="left:0;top:0" width="50" height="232"><rect width="50" height="232" filter="url(#nz)"/></svg></div>
<div style="left:576px;top:152px;width:41px;height:20px;background:#4b4d4f;"></div>
<div style="left:576px;top:155px;width:41px;height:5px;line-height:5px;text-align:center;white-space:nowrap;font-size:8.4px;font-weight:bold;color:#ffffff;letter-spacing:0px;"><span style="display:inline-block;transform:scale(0.5);transform-origin:50% 50%;margin:0 -100px;">Х../l &nbsp; хаоАсСлаt</span></div>
<div style="left:572px;top:161px;width:49px;height:11px;line-height:11px;font-size:8.6px;color:#fff;text-align:center;white-space:nowrap;text-shadow:0 0 0.4px #fff;"><span style="display:inline-block;transform:scaleX(0.78);transform-origin:50% 50%;">PP 00 011</span></div>
<div style="left:579px;top:172px;width:35px;height:37px;background:#4b4d4f;"></div>
<div style="left:581px;top:174px;width:9px;height:4px;background:#ff0000;"></div>
<div style="left:581px;top:174px;width:9px;height:4px;line-height:4px;font-size:3.5px;color:#ffd0e0;text-align:center;white-space:nowrap;font-weight:bold;">HRK</div>
<div style="left:604px;top:174px;width:9px;height:4px;background:#ff0000;"></div>
<div style="left:604px;top:174px;width:9px;height:4px;line-height:4px;font-size:3.5px;color:#ffd0e0;text-align:center;white-space:nowrap;font-weight:bold;">PWR</div>
<div style="left:571px;top:209px;width:50px;height:18px;background:#ffffff;"></div>
<div style="left:571px;top:209px;width:50px;height:18px;line-height:18px;font-size:7px;color:#1c2340;text-align:center;white-space:nowrap;font-weight:bold;"><span style="display:inline-block;transform:scaleX(0.86);transform-origin:50% 50%;">PPXXXXXX</span></div>
<svg style="left:580px;top:246px" width="16" height="20" viewBox="0 0 16 20"><circle cx="8" cy="8" r="5.3" fill="none" stroke="#a8a8a8" stroke-width="0.8" stroke-dasharray="2.2 1.2"/><rect x="8.3" y="3.5" width="2.4" height="9" rx="1" fill="#111"/><rect x="3.5" y="17" width="2.5" height="2.6" fill="#e8e8e8"/><rect x="7" y="17" width="1" height="2.6" fill="#ddd"/><rect x="9" y="17" width="1" height="2" fill="#bbb"/></svg>
<div style="left:596px;top:287px;width:16px;height:23px;background:#2a2a2a;border:2px solid #4d4d4d;"></div>
<div style="left:598px;top:298px;width:12px;height:1px;background:#4d4d4d;"></div>
<div style="left:604px;top:291px;width:1px;height:5px;background:#e8e8e8;"></div>
<div style="left:599px;top:300px;width:10px;height:7px;line-height:7px;font-size:6px;color:#e8e8e8;text-align:center;white-space:nowrap;">&lt;</div>
<div style="left:583px;top:325px;width:11px;height:33px;background:#2b7a4b;"></div>
<div style="left:585px;top:333px;width:6px;height:5px;background:#0a0a0a;border-radius:3px;"></div>
<div style="left:585px;top:339px;width:6px;height:5px;background:#0a0a0a;border-radius:3px;"></div>
<div style="left:585px;top:345px;width:6px;height:5px;background:#0a0a0a;border-radius:3px;"></div>
<div style="left:588px;top:328px;width:1px;height:1px;background:#0a0a0a;"></div>
<div style="left:588px;top:354px;width:1px;height:1px;background:#0a0a0a;"></div>
<div style="left:596px;top:335px;width:8px;height:5px;line-height:5px;text-align:left;white-space:nowrap;font-size:7.0px;font-weight:bold;color:#ccc;letter-spacing:0px;"><span style="display:inline-block;transform:scale(0.5);transform-origin:0 50%;">24V</span></div>
<div style="left:596px;top:341px;width:8px;height:5px;line-height:5px;text-align:left;white-space:nowrap;font-size:7.0px;font-weight:bold;color:#999;letter-spacing:0px;"><span style="display:inline-block;transform:scale(0.5);transform-origin:0 50%;">0V</span></div>
<div style="left:596px;top:351px;width:4px;height:1px;background:#ccc;"></div>
<div style="left:597.5px;top:348px;width:1px;height:3px;background:#ccc;"></div>
<div style="left:580px;top:364px;width:30px;height:12px;background:linear-gradient(#050505 0,#0a0a0a 62%,#2a2a2a 70%,#242424 90%,#0a0a0a 100%);border-radius:1px;"></div>
<div style="left:594px;top:365px;width:1px;height:11px;background:#3c3c3c;"></div>
<div style="left:624px;top:143px;width:105px;height:236px;background:#343436;border:2px solid #ff0000;border-radius:9px;overflow:hidden;"><svg style="left:0;top:0" width="101" height="232"><rect width="101" height="232" filter="url(#nz)"/></svg></div>
<div style="left:676px;top:147px;width:1px;height:62px;background:#1c1c1c;"></div>
<div style="left:676px;top:227px;width:1px;height:6px;background:#ddd;"></div>
<div style="left:676px;top:333px;width:1px;height:30px;background:#222;"></div>
<div style="left:631px;top:152px;width:41px;height:20px;background:#4b4d4f;"></div>
<div style="left:631px;top:155px;width:41px;height:5px;line-height:5px;text-align:center;white-space:nowrap;font-size:8.4px;font-weight:bold;color:#ffffff;letter-spacing:0px;"><span style="display:inline-block;transform:scale(0.5);transform-origin:50% 50%;margin:0 -100px;">Х-ЯВ &nbsp; хСаtаl.Хаl</span></div>
<div style="left:627px;top:161px;width:49px;height:11px;line-height:11px;font-size:8.6px;color:#fff;text-align:center;white-space:nowrap;text-shadow:0 0 0.4px #fff;"><span style="display:inline-block;transform:scaleX(0.78);transform-origin:50% 50%;">CU 00 071</span></div>
<div style="left:634px;top:172px;width:35px;height:37px;background:#4b4d4f;"></div>
<div style="left:636px;top:176px;width:9px;height:4px;background:#ff0000;"></div>
<div style="left:636px;top:176px;width:9px;height:4px;line-height:4px;font-size:3.5px;color:#ffd0e0;text-align:center;white-space:nowrap;font-weight:bold;">HP</div>
<div style="left:636px;top:182px;width:9px;height:4px;background:#ff0000;"></div>
<div style="left:636px;top:182px;width:9px;height:4px;line-height:4px;font-size:3.5px;color:#ffd0e0;text-align:center;white-space:nowrap;font-weight:bold;">PP</div>
<div style="left:636px;top:203px;width:9px;height:5px;background:#3fe060;"></div>
<div style="left:638px;top:204px;width:5px;height:2px;background:#1a7a30;"></div>
<div style="left:658px;top:176px;width:10px;height:5px;line-height:5px;text-align:center;white-space:nowrap;font-size:6.4px;font-weight:bold;color:#d0d0d0;letter-spacing:0px;"><span style="display:inline-block;transform:scale(0.5);transform-origin:50% 50%;margin:0 -100px;">LA3</span></div>
<div style="left:658px;top:181px;width:10px;height:5px;line-height:5px;text-align:center;white-space:nowrap;font-size:6.4px;font-weight:bold;color:#d0d0d0;letter-spacing:0px;"><span style="display:inline-block;transform:scale(0.5);transform-origin:50% 50%;margin:0 -100px;">LA4</span></div>
<div style="left:658px;top:187px;width:10px;height:5px;line-height:5px;text-align:center;white-space:nowrap;font-size:6.4px;font-weight:bold;color:#d0d0d0;letter-spacing:0px;"><span style="display:inline-block;transform:scale(0.5);transform-origin:50% 50%;margin:0 -100px;">LA5</span></div>
<div style="left:658px;top:192px;width:10px;height:5px;line-height:5px;text-align:center;white-space:nowrap;font-size:6.4px;font-weight:bold;color:#d0d0d0;letter-spacing:0px;"><span style="display:inline-block;transform:scale(0.5);transform-origin:50% 50%;margin:0 -100px;">LA6</span></div>
<div style="left:626px;top:209px;width:50px;height:18px;background:#ffffff;"></div>
<div style="left:626px;top:209px;width:50px;height:18px;line-height:18px;font-size:7px;color:#1c2340;text-align:center;white-space:nowrap;font-weight:bold;"><span style="display:inline-block;transform:scaleX(0.86);transform-origin:50% 50%;">CUXXXXXX</span></div>
<div style="left:682px;top:152px;width:41px;height:20px;background:#4b4d4f;"></div>
<div style="left:682px;top:153px;width:41px;height:9px;line-height:9px;font-size:6.5px;color:#dfe8ff;text-align:center;white-space:nowrap;">LD1 &nbsp;&nbsp; LD2</div>
<div style="left:680px;top:163px;width:45px;height:9px;line-height:9px;font-size:6px;color:#dfe8ff;text-align:center;white-space:nowrap;font-weight:bold;"><span style="display:inline-block;transform:scaleX(1.0);transform-origin:50% 50%;">Температура</span></div>
<div style="left:685px;top:172px;width:35px;height:37px;background:#4b4d4f;"></div>
<div style="left:685px;top:180px;width:35px;height:12px;background:#57595b;"></div>
<div style="left:685px;top:180px;width:35px;height:6px;line-height:6px;font-size:5px;color:#dfe8ff;text-align:center;white-space:nowrap;">Date</div>
<div style="left:685px;top:186px;width:35px;height:6px;line-height:6px;font-size:5px;color:#dfe8ff;text-align:center;white-space:nowrap;">Time</div>
<div style="left:678px;top:209px;width:50px;height:11px;background:#fff;"></div>
<div style="left:678px;top:210px;width:50px;height:11px;line-height:11px;font-size:5.5px;color:#1c2340;text-align:center;white-space:nowrap;font-weight:bold;">Режим</div>
<svg style="left:634px;top:235px" width="14" height="14" viewBox="0 0 14 14"><circle cx="7" cy="7" r="4.6" fill="none" stroke="#9a9a9a" stroke-width="0.8" stroke-dasharray="2 1.3"/><rect x="5.6" y="2.6" width="3" height="8.8" rx="1" fill="#0a0a0a"/><rect x="11" y="1.5" width="1.6" height="1.6" fill="#ddd"/><rect x="2" y="11" width="1.4" height="1.4" fill="#bbb"/></svg>
<div style="left:635px;top:268px;width:14px;height:19px;background:#121212;"></div>
<div style="left:636px;top:270px;width:11px;height:16px;background:#ff0000;"></div>
<div style="left:635px;top:291px;width:14px;height:19px;background:#121212;"></div>
<div style="left:636px;top:293px;width:11px;height:16px;background:#ff0000;"></div>
<div style="left:634px;top:314px;width:15px;height:19px;background:#c8c8c8;"></div>
<div style="left:636px;top:316px;width:10px;height:16px;background:#ff0000;"></div>
<div style="left:635px;top:322px;width:1px;height:4px;background:#2a2a2a;"></div>
<div style="left:634px;top:337px;width:15px;height:19px;background:#c8c8c8;"></div>
<div style="left:636px;top:339px;width:10px;height:16px;background:#ff0000;"></div>
<div style="left:635px;top:345px;width:1px;height:4px;background:#2a2a2a;"></div>
<div style="left:630px;top:274px;width:1px;height:5px;background:repeating-linear-gradient(#bbb 0 1px,transparent 1px 2px);"></div>
<div style="left:630px;top:296px;width:1px;height:5px;background:repeating-linear-gradient(#bbb 0 1px,transparent 1px 2px);"></div>
<div style="left:630px;top:321px;width:1px;height:5px;background:repeating-linear-gradient(#bbb 0 1px,transparent 1px 2px);"></div>
<div style="left:630px;top:344px;width:1px;height:5px;background:repeating-linear-gradient(#bbb 0 1px,transparent 1px 2px);"></div>
<div style="left:635px;top:364px;width:30px;height:12px;background:linear-gradient(#050505 0,#0a0a0a 62%,#2a2a2a 70%,#242424 90%,#0a0a0a 100%);border-radius:1px;"></div>
<div style="left:649px;top:365px;width:1px;height:11px;background:#3c3c3c;"></div>
<div style="left:635px;top:365px;width:30px;height:5px;line-height:5px;text-align:center;white-space:nowrap;font-size:9.0px;font-weight:bold;color:#fff;letter-spacing:1.2px;"><span style="display:inline-block;transform:scale(0.5);transform-origin:50% 50%;margin:0 -100px;">×.XXXX</span></div>
<svg style="left:704px;top:235px" width="14" height="14" viewBox="0 0 14 14"><circle cx="7" cy="7" r="4.6" fill="none" stroke="#9a9a9a" stroke-width="0.8" stroke-dasharray="2 1.3"/><rect x="5.6" y="2.6" width="3" height="8.8" rx="1" fill="#0a0a0a"/><rect x="11" y="1.5" width="1.6" height="1.6" fill="#ddd"/><rect x="2" y="11" width="1.4" height="1.4" fill="#bbb"/></svg>
<svg style="left:704px;top:251px" width="14" height="14" viewBox="0 0 14 14"><circle cx="7" cy="7" r="4.6" fill="none" stroke="#9a9a9a" stroke-width="0.8" stroke-dasharray="2 1.3"/><rect x="5.6" y="2.6" width="3" height="8.8" rx="1" fill="#0a0a0a"/><rect x="11" y="1.5" width="1.6" height="1.6" fill="#ddd"/><rect x="2" y="11" width="1.4" height="1.4" fill="#bbb"/></svg>
<div style="left:705px;top:272px;width:12px;height:12px;background:#8c8468;border-radius:6px;border:1.5px solid #b3a77f;"></div>
<div style="left:709px;top:276px;width:4px;height:4px;background:#9a9a9a;border-radius:2px;"></div>
<div style="left:703px;top:274px;width:2px;height:5px;background:#ddd;"></div>
<div style="left:696px;top:288px;width:21px;height:20px;background:#c9c9c9;"></div>
<div style="left:698px;top:290px;width:7px;height:15px;background:linear-gradient(90deg,#5a5a5a,#3a3a3a 60%,#555);"></div>
<div style="left:708px;top:290px;width:7px;height:15px;background:linear-gradient(90deg,#5a5a5a,#3a3a3a 60%,#555);"></div>
<div style="left:692px;top:296px;width:3px;height:5px;background:#ddd;"></div>
<div style="left:684px;top:311px;width:13px;height:48px;background:#cfcfcf;"></div>
<div style="left:688px;top:320px;width:7px;height:30px;background:#f4f4f4;border-radius:1px;"></div>
<div style="left:689px;top:321px;width:5px;height:22px;background:repeating-linear-gradient(#222 0 1px,transparent 1px 2px);-webkit-mask:repeating-linear-gradient(90deg,#000 0 1px,transparent 1px 2px);mask:repeating-linear-gradient(90deg,#000 0 1px,transparent 1px 2px);"></div>
<div style="left:689px;top:345px;width:2px;height:2px;background:#333;"></div>
<div style="left:692px;top:345px;width:2px;height:2px;background:#333;"></div>
<div style="left:690px;top:313px;width:3px;height:3px;background:#333;border-radius:2px;"></div>
<div style="left:690px;top:354px;width:3px;height:3px;background:#333;border-radius:2px;"></div>
<div style="left:680px;top:332px;width:3px;height:5px;background:#ddd;"></div>
<div style="left:704px;top:314px;width:16px;height:19px;background:#c8c8c8;"></div>
<div style="left:708px;top:315px;width:10px;height:16px;background:#ff0000;"></div>
<div style="left:718px;top:321px;width:1px;height:5px;background:#802020;"></div>
<div style="left:704px;top:337px;width:16px;height:19px;background:#c8c8c8;"></div>
<div style="left:708px;top:338px;width:10px;height:16px;background:#ff0000;"></div>
<div style="left:718px;top:344px;width:1px;height:5px;background:#802020;"></div>
<div style="left:700px;top:320px;width:1px;height:6px;background:repeating-linear-gradient(#bbb 0 1px,transparent 1px 2px);"></div>
<div style="left:700px;top:343px;width:1px;height:6px;background:repeating-linear-gradient(#bbb 0 1px,transparent 1px 2px);"></div>
<div style="left:686px;top:364px;width:30px;height:12px;background:linear-gradient(#050505 0,#0a0a0a 62%,#2a2a2a 70%,#242424 90%,#0a0a0a 100%);border-radius:1px;"></div>
<div style="left:700px;top:365px;width:1px;height:11px;background:#3c3c3c;"></div>
<div style="left:731px;top:143px;width:54px;height:236px;background:#343436;border:2px solid #ff0000;border-radius:9px;overflow:hidden;"><svg style="left:0;top:0" width="50" height="232"><rect width="50" height="232" filter="url(#nz)"/></svg></div>
<div style="left:737px;top:152px;width:42px;height:20px;background:#4b4d4f;"></div>
<div style="left:737px;top:155px;width:42px;height:5px;line-height:5px;text-align:center;white-space:nowrap;font-size:8.4px;font-weight:bold;color:#ffffff;letter-spacing:0px;"><span style="display:inline-block;transform:scale(0.5);transform-origin:50% 50%;margin:0 -100px;">Х../ &nbsp; хСаtаl.Хаl</span></div>
<div style="left:733px;top:161px;width:50px;height:11px;line-height:11px;font-size:8.6px;color:#fff;text-align:center;white-space:nowrap;text-shadow:0 0 0.4px #fff;"><span style="display:inline-block;transform:scaleX(0.78);transform-origin:50% 50%;">AI 08 041</span></div>
<div style="left:741px;top:172px;width:35px;height:37px;background:#3f4142;"></div>
<div style="left:742px;top:177px;width:9px;height:4px;background:#ff0000;"></div>
<div style="left:742px;top:177px;width:9px;height:4px;line-height:4px;font-size:3.5px;color:#ffd0e0;text-align:center;white-space:nowrap;font-weight:bold;">HRK</div>
<div style="left:742px;top:203px;width:9px;height:5px;background:#3fe060;"></div>
<div style="left:744px;top:204px;width:5px;height:2px;background:#1a7a30;"></div>
<div style="left:755px;top:173px;width:1px;height:36px;background:repeating-linear-gradient(#e6e6f4 0 3px,transparent 3px 5px);"></div>
<div style="left:759px;top:173px;width:13px;height:36px;border-left:1px solid #55554a;border-right:1px solid #55554a;background:repeating-linear-gradient(#5a5a4e 0 1px,#44453e 1px 5px);"></div>
<div style="left:765px;top:173px;width:1px;height:36px;background:repeating-linear-gradient(#3fc060 0 3px,transparent 3px 5px);"></div>
<div style="left:733px;top:209px;width:50px;height:18px;background:#ffffff;"></div>
<div style="left:733px;top:209px;width:50px;height:18px;line-height:18px;font-size:7px;color:#1c2340;text-align:center;white-space:nowrap;font-weight:bold;"><span style="display:inline-block;transform:scaleX(0.86);transform-origin:50% 50%;">AIXXXXXX</span></div>
<div style="left:733px;top:239px;width:50px;height:1px;background:#6c6c6c;"></div>
<div style="left:733px;top:259px;width:50px;height:1px;background:#5c5c5c;"></div>
<div style="left:733px;top:353px;width:10px;height:1px;background:#777;"></div>
<div style="left:741px;top:364px;width:34px;height:5px;line-height:5px;text-align:center;white-space:nowrap;font-size:9.0px;font-weight:bold;color:#e8e8e8;letter-spacing:1.2px;"><span style="display:inline-block;transform:scale(0.5);transform-origin:50% 50%;margin:0 -100px;">×.XXXX</span></div>
<div style="left:740px;top:374px;width:36px;height:2px;background:#111;border-radius:2px;"></div>
<div style="left:786px;top:143px;width:54px;height:236px;background:#343436;border:2px solid #ff0000;border-radius:9px;overflow:hidden;"><svg style="left:0;top:0" width="50" height="232"><rect width="50" height="232" filter="url(#nz)"/></svg></div>
<div style="left:792px;top:152px;width:42px;height:20px;background:#4b4d4f;"></div>
<div style="left:792px;top:155px;width:42px;height:5px;line-height:5px;text-align:center;white-space:nowrap;font-size:8.4px;font-weight:bold;color:#ffffff;letter-spacing:0px;"><span style="display:inline-block;transform:scale(0.5);transform-origin:50% 50%;margin:0 -100px;">СЯ. &nbsp; хаоАсСлаt</span></div>
<div style="left:788px;top:161px;width:50px;height:11px;line-height:11px;font-size:8.6px;color:#fff;text-align:center;white-space:nowrap;text-shadow:0 0 0.4px #fff;"><span style="display:inline-block;transform:scaleX(0.78);transform-origin:50% 50%;">AO 08 011</span></div>
<div style="left:796px;top:172px;width:35px;height:37px;background:#3f4142;"></div>
<div style="left:797px;top:177px;width:9px;height:4px;background:#ff0000;"></div>
<div style="left:797px;top:177px;width:9px;height:4px;line-height:4px;font-size:3.5px;color:#ffd0e0;text-align:center;white-space:nowrap;font-weight:bold;">HRK</div>
<div style="left:797px;top:184px;width:9px;height:4px;background:#ff0000;"></div>
<div style="left:797px;top:184px;width:9px;height:4px;line-height:4px;font-size:3.5px;color:#ffd0e0;text-align:center;white-space:nowrap;font-weight:bold;">HPX</div>
<div style="left:797px;top:203px;width:9px;height:5px;background:#3fe060;"></div>
<div style="left:799px;top:204px;width:5px;height:2px;background:#1a7a30;"></div>
<div style="left:810px;top:173px;width:1px;height:36px;background:repeating-linear-gradient(#e6e6f4 0 3px,transparent 3px 5px);"></div>
<div style="left:814px;top:173px;width:13px;height:36px;border-left:1px solid #55554a;border-right:1px solid #55554a;background:repeating-linear-gradient(#5a5a4e 0 1px,#44453e 1px 5px);"></div>
<div style="left:820px;top:173px;width:1px;height:36px;background:repeating-linear-gradient(#3fc060 0 3px,transparent 3px 5px);"></div>
<div style="left:788px;top:209px;width:50px;height:18px;background:#ffffff;"></div>
<div style="left:788px;top:209px;width:50px;height:18px;line-height:18px;font-size:7px;color:#1c2340;text-align:center;white-space:nowrap;font-weight:bold;"><span style="display:inline-block;transform:scaleX(0.86);transform-origin:50% 50%;">AOXXXXXX</span></div>
<div style="left:788px;top:239px;width:50px;height:1px;background:#6c6c6c;"></div>
<div style="left:788px;top:259px;width:50px;height:1px;background:#5c5c5c;"></div>
<div style="left:788px;top:353px;width:10px;height:1px;background:#777;"></div>
<div style="left:796px;top:364px;width:34px;height:5px;line-height:5px;text-align:center;white-space:nowrap;font-size:9.0px;font-weight:bold;color:#e8e8e8;letter-spacing:1.2px;"><span style="display:inline-block;transform:scale(0.5);transform-origin:50% 50%;margin:0 -100px;">×.XXXX</span></div>
<div style="left:795px;top:374px;width:36px;height:2px;background:#111;border-radius:2px;"></div>
<div style="left:839px;top:143px;width:54px;height:236px;background:#343436;border:2px solid #ff0000;border-radius:9px;overflow:hidden;"><svg style="left:0;top:0" width="50" height="232"><rect width="50" height="232" filter="url(#nz)"/></svg></div>
<div style="left:845px;top:152px;width:42px;height:20px;background:#4b4d4f;"></div>
<div style="left:845px;top:155px;width:42px;height:5px;line-height:5px;text-align:center;white-space:nowrap;font-size:8.4px;font-weight:bold;color:#ffffff;letter-spacing:0px;"><span style="display:inline-block;transform:scale(0.5);transform-origin:50% 50%;margin:0 -100px;">СЯ. &nbsp; хаоАсСлаt</span></div>
<div style="left:841px;top:161px;width:50px;height:11px;line-height:11px;font-size:8.6px;color:#fff;text-align:center;white-space:nowrap;text-shadow:0 0 0.4px #fff;"><span style="display:inline-block;transform:scaleX(0.78);transform-origin:50% 50%;">DI 32 011</span></div>
<div style="left:849px;top:172px;width:35px;height:37px;background:#3f4142;"></div>
<div style="left:850px;top:177px;width:9px;height:4px;background:#ff0000;"></div>
<div style="left:850px;top:177px;width:9px;height:4px;line-height:4px;font-size:3.5px;color:#ffd0e0;text-align:center;white-space:nowrap;font-weight:bold;">HRK</div>
<div style="left:850px;top:203px;width:9px;height:5px;background:#3fe060;"></div>
<div style="left:852px;top:204px;width:5px;height:2px;background:#1a7a30;"></div>
<svg style="left:863px;top:173px" width="20" height="37" viewBox="0 0 20 37"><defs><pattern id="dots839_143" width="5" height="4.7" patternUnits="userSpaceOnUse"><rect x="1" y="1" width="1.4" height="1.6" fill="#dca24c"/><rect x="0.6" y="0.6" width="0.8" height="0.8" fill="#7f9fe0"/></pattern></defs><rect x="0" y="0" width="20" height="36" fill="url(#dots839_143)"/></svg>
<div style="left:841px;top:209px;width:50px;height:18px;background:#ffffff;"></div>
<div style="left:841px;top:209px;width:50px;height:18px;line-height:18px;font-size:7px;color:#1c2340;text-align:center;white-space:nowrap;font-weight:bold;"><span style="display:inline-block;transform:scaleX(0.86);transform-origin:50% 50%;">DIXXXXXX</span></div>
<div style="left:841px;top:239px;width:50px;height:1px;background:#6c6c6c;"></div>
<div style="left:841px;top:259px;width:50px;height:1px;background:#5c5c5c;"></div>
<div style="left:841px;top:353px;width:10px;height:1px;background:#777;"></div>
<div style="left:849px;top:364px;width:34px;height:5px;line-height:5px;text-align:center;white-space:nowrap;font-size:9.0px;font-weight:bold;color:#e8e8e8;letter-spacing:1.2px;"><span style="display:inline-block;transform:scale(0.5);transform-origin:50% 50%;margin:0 -100px;">×.XXXX</span></div>
<div style="left:848px;top:374px;width:36px;height:2px;background:#111;border-radius:2px;"></div>
<div style="left:893px;top:143px;width:55px;height:236px;background:#343436;border:2px solid #ff0000;border-radius:9px;overflow:hidden;"><svg style="left:0;top:0" width="51" height="232"><rect width="51" height="232" filter="url(#nz)"/></svg></div>
<div style="left:899px;top:152px;width:42px;height:20px;background:#4b4d4f;"></div>
<div style="left:899px;top:155px;width:42px;height:5px;line-height:5px;text-align:center;white-space:nowrap;font-size:8.4px;font-weight:bold;color:#ffffff;letter-spacing:0px;"><span style="display:inline-block;transform:scale(0.5);transform-origin:50% 50%;margin:0 -100px;">Х../l &nbsp; хСаtаl.Хаl</span></div>
<div style="left:895px;top:161px;width:50px;height:11px;line-height:11px;font-size:8.6px;color:#fff;text-align:center;white-space:nowrap;text-shadow:0 0 0.4px #fff;"><span style="display:inline-block;transform:scaleX(0.78);transform-origin:50% 50%;">DO 32 011</span></div>
<div style="left:903px;top:172px;width:35px;height:37px;background:#3f4142;"></div>
<div style="left:904px;top:177px;width:9px;height:4px;background:#ff0000;"></div>
<div style="left:904px;top:177px;width:9px;height:4px;line-height:4px;font-size:3.5px;color:#ffd0e0;text-align:center;white-space:nowrap;font-weight:bold;">HRK</div>
<div style="left:904px;top:203px;width:9px;height:5px;background:#3fe060;"></div>
<div style="left:906px;top:204px;width:5px;height:2px;background:#1a7a30;"></div>
<svg style="left:917px;top:173px" width="20" height="37" viewBox="0 0 20 37"><defs><pattern id="dots893_143" width="5" height="4.7" patternUnits="userSpaceOnUse"><rect x="1" y="1" width="1.4" height="1.6" fill="#dca24c"/><rect x="0.6" y="0.6" width="0.8" height="0.8" fill="#7f9fe0"/></pattern></defs><rect x="0" y="0" width="20" height="36" fill="url(#dots893_143)"/></svg>
<div style="left:895px;top:209px;width:51px;height:18px;background:#ffffff;"></div>
<div style="left:895px;top:209px;width:51px;height:18px;line-height:18px;font-size:7px;color:#1c2340;text-align:center;white-space:nowrap;font-weight:bold;"><span style="display:inline-block;transform:scaleX(0.86);transform-origin:50% 50%;">DOXXXXXX</span></div>
<div style="left:895px;top:239px;width:51px;height:1px;background:#6c6c6c;"></div>
<div style="left:895px;top:259px;width:51px;height:1px;background:#5c5c5c;"></div>
<div style="left:895px;top:353px;width:10px;height:1px;background:#777;"></div>
<div style="left:903px;top:364px;width:34px;height:5px;line-height:5px;text-align:center;white-space:nowrap;font-size:9.0px;font-weight:bold;color:#e8e8e8;letter-spacing:1.2px;"><span style="display:inline-block;transform:scale(0.5);transform-origin:50% 50%;margin:0 -100px;">×.XXXX</span></div>
<div style="left:902px;top:374px;width:37px;height:2px;background:#111;border-radius:2px;"></div>
<div style="left:948.5px;top:192px;width:43px;height:138px;background:#272727;border-radius:21px 21px 21px 21px / 5px 5px 5px 5px;"></div>
<div style="left:948.5px;top:192px;width:43px;height:22px;background:#232323;border-radius:21px 21px 0 0 / 5px 5px 0 0;"></div>
<div style="left:948.5px;top:308px;width:43px;height:22px;background:#232323;border-radius:0 0 21px 21px / 0 0 5px 5px;"></div>
<div style="left:950.5px;top:214px;width:39px;height:2px;background:#393939;"></div>
<div style="left:950.5px;top:306px;width:39px;height:2px;background:#393939;"></div>
<div style="left:950.5px;top:216px;width:10px;height:90px;background:linear-gradient(#0d0d0d 0,#2b2b2b 22%,#2b2b2b 70%,#0d0d0d 100%);"></div>
<div style="left:979.5px;top:216px;width:10px;height:90px;background:linear-gradient(#0d0d0d 0,#2b2b2b 22%,#2b2b2b 70%,#0d0d0d 100%);"></div>
<div style="left:960.5px;top:216px;width:19px;height:90px;background:#171717;"></div>
<div style="left:960.5px;top:216px;width:19px;height:3px;background:#0a0a0a;"></div>
<div style="left:948.5px;top:197px;width:2px;height:8px;background:#050505;border-radius:0 2px 2px 0;"></div>
<div style="left:989.5px;top:197px;width:2px;height:8px;background:#050505;border-radius:2px 0 0 2px;"></div>
<div style="left:948.5px;top:317px;width:2px;height:8px;background:#050505;border-radius:0 2px 2px 0;"></div>
<div style="left:989.5px;top:317px;width:2px;height:8px;background:#050505;border-radius:2px 0 0 2px;"></div>
<div style="left:963.5px;top:199px;width:3px;height:5px;background:#050505;"></div>
<div style="left:973.5px;top:199px;width:3px;height:5px;background:#050505;"></div>
<div style="left:963.5px;top:319px;width:3px;height:5px;background:#050505;"></div>
<div style="left:973.5px;top:319px;width:3px;height:5px;background:#050505;"></div>
<div style="left:967.0px;top:203.5px;width:7px;height:7px;background:#0c0c0c;border-radius:3.5px;"></div>
<div style="left:968.0px;top:204.5px;width:5px;height:5px;background:#aeaaac;border-radius:2.5px;"></div>
<div style="left:969.5px;top:205.5px;width:2px;height:2px;background:#d0cccf;border-radius:1px;"></div>
<div style="left:967.0px;top:311.5px;width:7px;height:7px;background:#0c0c0c;border-radius:3.5px;"></div>
<div style="left:968.0px;top:312.5px;width:5px;height:5px;background:#aeaaac;border-radius:2.5px;"></div>
<div style="left:969.5px;top:313.5px;width:2px;height:2px;background:#d0cccf;border-radius:1px;"></div>
<div style="left:961.5px;top:219px;width:17px;height:18px;background:#cfcfd1;"></div>
<div style="left:962.5px;top:225px;width:15px;height:10px;background:#1a1a1a;"></div>
<div style="left:963.5px;top:225px;width:14px;height:9px;background:#ff0000;"></div>
<div style="left:961.5px;top:286px;width:17px;height:17px;background:#cfcfd1;"></div>
<div style="left:962.5px;top:288px;width:15px;height:10px;background:#1a1a1a;"></div>
<div style="left:963.5px;top:288px;width:14px;height:9px;background:#ff0000;"></div>
<div style="left:961.5px;top:238px;width:6px;height:3px;background:#f02030;"></div>
<div style="left:968.5px;top:238px;width:3px;height:3px;background:#e8e8e8;"></div>
<div style="left:961.5px;top:281px;width:6px;height:3px;background:#f02030;"></div>
<div style="left:968.5px;top:280px;width:3px;height:3px;background:#e8e8e8;"></div>
<div style="left:953.5px;top:250px;width:2px;height:20px;background:repeating-linear-gradient(#9a9a9a 0 1px,transparent 1px 2px);"></div>
<div style="left:982.5px;top:258px;width:2px;height:16px;background:repeating-linear-gradient(#9a9a9a 0 1px,transparent 1px 2px);"></div>
<div style="left:966.5px;top:249px;width:10px;height:5px;line-height:5px;font-size:3.5px;color:#ddd;text-align:center;white-space:nowrap;font-weight:bold;">XP</div>
<div style="left:247px;top:493px;width:43px;height:138px;background:#272727;border-radius:21px 21px 21px 21px / 5px 5px 5px 5px;"></div>
<div style="left:247px;top:493px;width:43px;height:22px;background:#232323;border-radius:21px 21px 0 0 / 5px 5px 0 0;"></div>
<div style="left:247px;top:609px;width:43px;height:22px;background:#232323;border-radius:0 0 21px 21px / 0 0 5px 5px;"></div>
<div style="left:249px;top:515px;width:39px;height:2px;background:#393939;"></div>
<div style="left:249px;top:607px;width:39px;height:2px;background:#393939;"></div>
<div style="left:249px;top:517px;width:10px;height:90px;background:linear-gradient(#0d0d0d 0,#2b2b2b 22%,#2b2b2b 70%,#0d0d0d 100%);"></div>
<div style="left:278px;top:517px;width:10px;height:90px;background:linear-gradient(#0d0d0d 0,#2b2b2b 22%,#2b2b2b 70%,#0d0d0d 100%);"></div>
<div style="left:259px;top:517px;width:19px;height:90px;background:#171717;"></div>
<div style="left:259px;top:517px;width:19px;height:3px;background:#0a0a0a;"></div>
<div style="left:247px;top:498px;width:2px;height:8px;background:#050505;border-radius:0 2px 2px 0;"></div>
<div style="left:288px;top:498px;width:2px;height:8px;background:#050505;border-radius:2px 0 0 2px;"></div>
<div style="left:247px;top:618px;width:2px;height:8px;background:#050505;border-radius:0 2px 2px 0;"></div>
<div style="left:288px;top:618px;width:2px;height:8px;background:#050505;border-radius:2px 0 0 2px;"></div>
<div style="left:262px;top:500px;width:3px;height:5px;background:#050505;"></div>
<div style="left:272px;top:500px;width:3px;height:5px;background:#050505;"></div>
<div style="left:262px;top:620px;width:3px;height:5px;background:#050505;"></div>
<div style="left:272px;top:620px;width:3px;height:5px;background:#050505;"></div>
<div style="left:265.5px;top:504.5px;width:7px;height:7px;background:#0c0c0c;border-radius:3.5px;"></div>
<div style="left:266.5px;top:505.5px;width:5px;height:5px;background:#aeaaac;border-radius:2.5px;"></div>
<div style="left:268px;top:506.5px;width:2px;height:2px;background:#d0cccf;border-radius:1px;"></div>
<div style="left:265.5px;top:612.5px;width:7px;height:7px;background:#0c0c0c;border-radius:3.5px;"></div>
<div style="left:266.5px;top:613.5px;width:5px;height:5px;background:#aeaaac;border-radius:2.5px;"></div>
<div style="left:268px;top:614.5px;width:2px;height:2px;background:#d0cccf;border-radius:1px;"></div>
<div style="left:260px;top:520px;width:17px;height:18px;background:#cfcfd1;"></div>
<div style="left:261px;top:526px;width:15px;height:10px;background:#1a1a1a;"></div>
<div style="left:262px;top:526px;width:14px;height:9px;background:#ff0000;"></div>
<div style="left:260px;top:587px;width:17px;height:17px;background:#cfcfd1;"></div>
<div style="left:261px;top:589px;width:15px;height:10px;background:#1a1a1a;"></div>
<div style="left:262px;top:589px;width:14px;height:9px;background:#ff0000;"></div>
<div style="left:260px;top:539px;width:6px;height:3px;background:#f02030;"></div>
<div style="left:267px;top:539px;width:3px;height:3px;background:#e8e8e8;"></div>
<div style="left:260px;top:582px;width:6px;height:3px;background:#f02030;"></div>
<div style="left:267px;top:581px;width:3px;height:3px;background:#e8e8e8;"></div>
<div style="left:253px;top:551px;width:2px;height:20px;background:repeating-linear-gradient(#9a9a9a 0 1px,transparent 1px 2px);"></div>
<div style="left:280px;top:559px;width:2px;height:16px;background:repeating-linear-gradient(#9a9a9a 0 1px,transparent 1px 2px);"></div>
<div style="left:260px;top:546px;width:1px;height:20px;background:repeating-linear-gradient(#6f6a58 0 1px,transparent 1px 3px);"></div>
<div style="left:269px;top:551px;width:3px;height:3px;background:#f4f4f4;"></div>
<div style="left:265px;top:546px;width:1px;height:20px;background:repeating-linear-gradient(#8a8468 0 1px,transparent 1px 3px);"></div>
<div style="left:289px;top:444px;width:55px;height:236px;background:#343436;border:2px solid #ff0000;border-radius:9px;overflow:hidden;"><svg style="left:0;top:0" width="51" height="232"><rect width="51" height="232" filter="url(#nz)"/></svg></div>
<div style="left:297px;top:453px;width:41px;height:20px;background:#4b4d4f;"></div>
<div style="left:297px;top:456px;width:41px;height:5px;line-height:5px;text-align:center;white-space:nowrap;font-size:8.4px;font-weight:bold;color:#ffffff;letter-spacing:0px;"><span style="display:inline-block;transform:scale(0.5);transform-origin:50% 50%;margin:0 -100px;">Х../l &nbsp; хаоАсСлаt</span></div>
<div style="left:293px;top:462px;width:49px;height:11px;line-height:11px;font-size:8px;color:#fff;text-align:center;white-space:nowrap;text-shadow:0 0 0.4px #fff;"><span style="display:inline-block;transform:scaleX(0.78);transform-origin:50% 50%;">PP 00 011</span></div>
<div style="left:300px;top:473px;width:35px;height:37px;background:#4b4d4f;"></div>
<div style="left:300px;top:473px;width:35px;height:1px;background:#9a9a9a;"></div>
<div style="left:302px;top:475px;width:9px;height:4px;background:#ff0000;"></div>
<div style="left:302px;top:475px;width:9px;height:4px;line-height:4px;font-size:3.5px;color:#ffd0e0;text-align:center;white-space:nowrap;font-weight:bold;">HRK</div>
<div style="left:325px;top:475px;width:9px;height:4px;background:#ff0000;"></div>
<div style="left:325px;top:475px;width:9px;height:4px;line-height:4px;font-size:3.5px;color:#ffd0e0;text-align:center;white-space:nowrap;font-weight:bold;">PWR</div>
<div style="left:291px;top:510px;width:51px;height:18px;background:#ffffff;"></div>
<div style="left:291px;top:510px;width:51px;height:18px;line-height:18px;font-size:7px;color:#1c2340;text-align:center;white-space:nowrap;font-weight:bold;"><span style="display:inline-block;transform:scaleX(0.86);transform-origin:50% 50%;">PPXXXXXX</span></div>
<svg style="left:301px;top:547px" width="16" height="20" viewBox="0 0 16 20"><circle cx="8" cy="8" r="5.3" fill="none" stroke="#a8a8a8" stroke-width="0.8" stroke-dasharray="2.2 1.2"/><rect x="8.3" y="3.5" width="2.4" height="9" rx="1" fill="#111"/><rect x="3.5" y="17" width="2.5" height="2.6" fill="#e8e8e8"/><rect x="7" y="17" width="1" height="2.6" fill="#ddd"/><rect x="9" y="17" width="1" height="2" fill="#bbb"/></svg>
<div style="left:317px;top:588px;width:16px;height:23px;background:#2a2a2a;border:2px solid #4d4d4d;"></div>
<div style="left:319px;top:599px;width:12px;height:1px;background:#4d4d4d;"></div>
<div style="left:325px;top:592px;width:1px;height:5px;background:#e8e8e8;"></div>
<div style="left:320px;top:601px;width:10px;height:7px;line-height:7px;font-size:6px;color:#e8e8e8;text-align:center;white-space:nowrap;">&lt;</div>
<div style="left:304px;top:626px;width:11px;height:33px;background:#2b7a4b;"></div>
<div style="left:306px;top:634px;width:6px;height:5px;background:#0a0a0a;border-radius:3px;"></div>
<div style="left:306px;top:640px;width:6px;height:5px;background:#0a0a0a;border-radius:3px;"></div>
<div style="left:306px;top:646px;width:6px;height:5px;background:#0a0a0a;border-radius:3px;"></div>
<div style="left:309px;top:629px;width:1px;height:1px;background:#0a0a0a;"></div>
<div style="left:309px;top:655px;width:1px;height:1px;background:#0a0a0a;"></div>
<div style="left:317px;top:636px;width:8px;height:5px;line-height:5px;text-align:left;white-space:nowrap;font-size:7.0px;font-weight:bold;color:#ccc;letter-spacing:0px;"><span style="display:inline-block;transform:scale(0.5);transform-origin:0 50%;">24V</span></div>
<div style="left:317px;top:642px;width:8px;height:5px;line-height:5px;text-align:left;white-space:nowrap;font-size:7.0px;font-weight:bold;color:#999;letter-spacing:0px;"><span style="display:inline-block;transform:scale(0.5);transform-origin:0 50%;">0V</span></div>
<div style="left:317px;top:652px;width:4px;height:1px;background:#ccc;"></div>
<div style="left:318.5px;top:649px;width:1px;height:3px;background:#ccc;"></div>
<div style="left:301px;top:665px;width:30px;height:12px;background:linear-gradient(#050505 0,#0a0a0a 62%,#2a2a2a 70%,#242424 90%,#0a0a0a 100%);border-radius:1px;"></div>
<div style="left:315px;top:666px;width:1px;height:11px;background:#3c3c3c;"></div>
<div style="left:342px;top:444px;width:106px;height:236px;background:#f3cf42;border:3px solid #ff0000;border-radius:9px;overflow:hidden;"><svg style="left:0;top:0" width="100" height="230"><rect width="100" height="230" filter="url(#nzy)"/></svg></div>
<div style="left:345px;top:447px;width:100px;height:67px;background:#38393a;border-radius:6px 6px 0 0;"></div>
<div style="left:394px;top:447px;width:1px;height:230px;background:#6b5c18;"></div>
<div style="left:394px;top:447px;width:1px;height:67px;background:#111;"></div>
<div style="left:349px;top:454px;width:41px;height:20px;background:#4b4d4f;"></div>
<div style="left:349px;top:457px;width:41px;height:5px;line-height:5px;text-align:center;white-space:nowrap;font-size:8.4px;font-weight:bold;color:#ffffff;letter-spacing:0px;"><span style="display:inline-block;transform:scale(0.5);transform-origin:50% 50%;margin:0 -100px;">В:::Э х.г.г.А...</span></div>
<div style="left:345px;top:463px;width:49px;height:11px;line-height:11px;font-size:8px;color:#fff;text-align:center;white-space:nowrap;text-shadow:0 0 0.4px #fff;"><span style="display:inline-block;transform:scaleX(0.78);transform-origin:50% 50%;">CU 00 B51</span></div>
<div style="left:353px;top:474px;width:34px;height:37px;background:#434546;"></div>
<div style="left:354px;top:476px;width:10px;height:5px;background:#ff0000;"></div>
<div style="left:354px;top:476px;width:10px;height:5px;line-height:5px;font-size:3.5px;color:#ffd0e0;text-align:center;white-space:nowrap;font-weight:bold;">HP</div>
<div style="left:354px;top:482px;width:10px;height:5px;background:#ff0000;"></div>
<div style="left:354px;top:482px;width:10px;height:5px;line-height:5px;font-size:3.5px;color:#ffd0e0;text-align:center;white-space:nowrap;font-weight:bold;">PP</div>
<div style="left:354px;top:504px;width:10px;height:5px;background:#3fe060;"></div>
<div style="left:356px;top:505px;width:6px;height:3px;background:#1a7a30;"></div>
<div style="left:377px;top:476px;width:10px;height:6px;background:#404243;"></div>
<div style="left:377px;top:477px;width:10px;height:5px;line-height:5px;text-align:center;white-space:nowrap;font-size:7.6px;font-weight:bold;color:#eef0ff;letter-spacing:0px;"><span style="display:inline-block;transform:scale(0.5);transform-origin:50% 50%;margin:0 -100px;">Ur3</span></div>
<div style="left:377px;top:485px;width:10px;height:6px;background:#404243;"></div>
<div style="left:377px;top:486px;width:10px;height:5px;line-height:5px;text-align:center;white-space:nowrap;font-size:7.6px;font-weight:bold;color:#eef0ff;letter-spacing:0px;"><span style="display:inline-block;transform:scale(0.5);transform-origin:50% 50%;margin:0 -100px;">Ur4</span></div>
<div style="left:377px;top:493px;width:10px;height:6px;background:#404243;"></div>
<div style="left:377px;top:494px;width:10px;height:5px;line-height:5px;text-align:center;white-space:nowrap;font-size:7.6px;font-weight:bold;color:#eef0ff;letter-spacing:0px;"><span style="display:inline-block;transform:scale(0.5);transform-origin:50% 50%;margin:0 -100px;">Ur5</span></div>
<div style="left:377px;top:502px;width:10px;height:6px;background:#404243;"></div>
<div style="left:377px;top:503px;width:10px;height:5px;line-height:5px;text-align:center;white-space:nowrap;font-size:7.6px;font-weight:bold;color:#eef0ff;letter-spacing:0px;"><span style="display:inline-block;transform:scale(0.5);transform-origin:50% 50%;margin:0 -100px;">Ur6</span></div>
<div style="left:400px;top:454px;width:41px;height:20px;background:#4b4d4f;"></div>
<div style="left:400px;top:456px;width:41px;height:9px;line-height:9px;font-size:5.5px;color:#dfe8ff;text-align:center;white-space:nowrap;font-weight:bold;">LD1 &nbsp;&nbsp;&nbsp; LD2</div>
<div style="left:398px;top:465px;width:45px;height:9px;line-height:9px;font-size:5.5px;color:#dfe8ff;text-align:center;white-space:nowrap;font-weight:bold;"><span style="display:inline-block;transform:scaleX(1.0);transform-origin:50% 50%;">Температура</span></div>
<div style="left:404px;top:474px;width:34px;height:37px;background:#434546;"></div>
<div style="left:404px;top:475px;width:34px;height:16px;background:#545658;"></div>
<div style="left:404px;top:476px;width:34px;height:7px;line-height:7px;font-size:5px;color:#dfe8ff;text-align:center;white-space:nowrap;">Date</div>
<div style="left:404px;top:484px;width:34px;height:7px;line-height:7px;font-size:5px;color:#dfe8ff;text-align:center;white-space:nowrap;">Time</div>
<div style="left:345px;top:532px;width:49px;height:15px;background:#fff;"></div>
<div style="left:345px;top:532px;width:49px;height:15px;line-height:15px;font-size:5.5px;color:#1c2340;text-align:center;white-space:nowrap;font-weight:bold;"><span style="display:inline-block;transform:scaleX(0.9);transform-origin:50% 50%;">CUXXXXXX</span></div>
<div style="left:356px;top:554px;width:9px;height:9px;background:#b01018;border-radius:5px;border:1px solid #701010;"></div>
<div style="left:360px;top:551px;width:1px;height:3px;background:#222;"></div>
<div style="left:366px;top:558px;width:2px;height:2px;background:#222;"></div>
<div style="left:352px;top:569px;width:16px;height:18px;background:#5a5a5a;"></div>
<div style="left:355px;top:570px;width:12px;height:16px;background:#ff0000;"></div>
<div style="left:352px;top:573px;width:2px;height:8px;background:#2a5a3a;"></div>
<div style="left:348px;top:574px;width:2px;height:7px;background:repeating-linear-gradient(#222 0 1px,transparent 1px 2px);"></div>
<div style="left:352px;top:592px;width:16px;height:18px;background:#5a5a5a;"></div>
<div style="left:355px;top:593px;width:12px;height:16px;background:#ff0000;"></div>
<div style="left:352px;top:596px;width:2px;height:8px;background:#2a5a3a;"></div>
<div style="left:348px;top:597px;width:2px;height:7px;background:repeating-linear-gradient(#222 0 1px,transparent 1px 2px);"></div>
<div style="left:352px;top:615px;width:16px;height:18px;background:#5a5a5a;"></div>
<div style="left:355px;top:616px;width:12px;height:16px;background:#ff0000;"></div>
<div style="left:352px;top:619px;width:2px;height:8px;background:#2a5a3a;"></div>
<div style="left:348px;top:620px;width:2px;height:7px;background:repeating-linear-gradient(#222 0 1px,transparent 1px 2px);"></div>
<div style="left:352px;top:637px;width:16px;height:18px;background:#5a5a5a;"></div>
<div style="left:355px;top:638px;width:12px;height:16px;background:#ff0000;"></div>
<div style="left:352px;top:641px;width:2px;height:8px;background:#2a5a3a;"></div>
<div style="left:348px;top:642px;width:2px;height:7px;background:repeating-linear-gradient(#222 0 1px,transparent 1px 2px);"></div>
<div style="left:353px;top:665px;width:30px;height:12px;background:linear-gradient(#050505 0,#0a0a0a 62%,#2a2a2a 70%,#242424 90%,#0a0a0a 100%);border-radius:1px;"></div>
<div style="left:367px;top:666px;width:1px;height:11px;background:#3c3c3c;"></div>
<div style="left:353px;top:667px;width:30px;height:5px;line-height:5px;text-align:center;white-space:nowrap;font-size:8px;font-weight:bold;color:#e8e8e8;letter-spacing:0px;"><span style="display:inline-block;transform:scale(0.5);transform-origin:50% 50%;margin:0 -100px;">×.X.X.X.X</span></div>
<div style="left:423px;top:534px;width:10px;height:10px;background:#9a9a9a;border-radius:5px;border:1.5px solid #6e6e6e;"></div>
<div style="left:426px;top:537px;width:4px;height:4px;background:#bdbdbd;border-radius:2px;"></div>
<div style="left:421px;top:529px;width:14px;height:5px;line-height:5px;text-align:center;white-space:nowrap;font-size:6.4px;font-weight:bold;color:#222;letter-spacing:0px;"><span style="display:inline-block;transform:scale(0.5);transform-origin:50% 50%;margin:0 -100px;">RS-XX</span></div>
<div style="left:423px;top:556px;width:10px;height:20px;background:#6d6d6d;"></div>
<div style="left:425px;top:559px;width:5px;height:14px;background:#4a4a4a;"></div>
<div style="left:423px;top:582px;width:10px;height:20px;background:#6d6d6d;"></div>
<div style="left:425px;top:585px;width:5px;height:14px;background:#4a4a4a;"></div>
<div style="left:428px;top:550px;width:1px;height:1px;background:#222;"></div>
<div style="left:428px;top:578px;width:1px;height:1px;background:#222;"></div>
<div style="left:418px;top:615px;width:16px;height:18px;background:#5a5a5a;"></div>
<div style="left:421px;top:616px;width:12px;height:16px;background:#ff0000;"></div>
<div style="left:414px;top:620px;width:2px;height:7px;background:repeating-linear-gradient(#222 0 1px,transparent 1px 2px);"></div>
<div style="left:418px;top:637px;width:16px;height:18px;background:#5a5a5a;"></div>
<div style="left:421px;top:638px;width:12px;height:16px;background:#ff0000;"></div>
<div style="left:414px;top:642px;width:2px;height:7px;background:repeating-linear-gradient(#222 0 1px,transparent 1px 2px);"></div>
<div style="left:404px;top:665px;width:30px;height:12px;background:linear-gradient(#050505 0,#0a0a0a 62%,#2a2a2a 70%,#242424 90%,#0a0a0a 100%);border-radius:1px;"></div>
<div style="left:418px;top:666px;width:1px;height:11px;background:#3c3c3c;"></div>
<div style="left:446px;top:444px;width:106px;height:236px;background:#f3cf42;border:3px solid #ff0000;border-radius:9px;overflow:hidden;"><svg style="left:0;top:0" width="100" height="230"><rect width="100" height="230" filter="url(#nzy)"/></svg></div>
<div style="left:449px;top:447px;width:100px;height:67px;background:#38393a;border-radius:6px 6px 0 0;"></div>
<div style="left:498px;top:447px;width:1px;height:230px;background:#6b5c18;"></div>
<div style="left:498px;top:447px;width:1px;height:67px;background:#111;"></div>
<div style="left:453px;top:454px;width:41px;height:20px;background:#4b4d4f;"></div>
<div style="left:453px;top:457px;width:41px;height:5px;line-height:5px;text-align:center;white-space:nowrap;font-size:8.4px;font-weight:bold;color:#ffffff;letter-spacing:0px;"><span style="display:inline-block;transform:scale(0.5);transform-origin:50% 50%;margin:0 -100px;">В:::Э х.г.г.А...</span></div>
<div style="left:449px;top:463px;width:49px;height:11px;line-height:11px;font-size:8px;color:#fff;text-align:center;white-space:nowrap;text-shadow:0 0 0.4px #fff;"><span style="display:inline-block;transform:scaleX(0.78);transform-origin:50% 50%;">CU 00 B51</span></div>
<div style="left:457px;top:474px;width:34px;height:37px;background:#434546;"></div>
<div style="left:458px;top:476px;width:10px;height:5px;background:#ff0000;"></div>
<div style="left:458px;top:476px;width:10px;height:5px;line-height:5px;font-size:3.5px;color:#ffd0e0;text-align:center;white-space:nowrap;font-weight:bold;">HP</div>
<div style="left:458px;top:482px;width:10px;height:5px;background:#ff0000;"></div>
<div style="left:458px;top:482px;width:10px;height:5px;line-height:5px;font-size:3.5px;color:#ffd0e0;text-align:center;white-space:nowrap;font-weight:bold;">PP</div>
<div style="left:458px;top:504px;width:10px;height:5px;background:#3fe060;"></div>
<div style="left:460px;top:505px;width:6px;height:3px;background:#1a7a30;"></div>
<div style="left:481px;top:476px;width:10px;height:6px;background:#404243;"></div>
<div style="left:481px;top:477px;width:10px;height:5px;line-height:5px;text-align:center;white-space:nowrap;font-size:7.6px;font-weight:bold;color:#eef0ff;letter-spacing:0px;"><span style="display:inline-block;transform:scale(0.5);transform-origin:50% 50%;margin:0 -100px;">Ur3</span></div>
<div style="left:481px;top:485px;width:10px;height:6px;background:#404243;"></div>
<div style="left:481px;top:486px;width:10px;height:5px;line-height:5px;text-align:center;white-space:nowrap;font-size:7.6px;font-weight:bold;color:#eef0ff;letter-spacing:0px;"><span style="display:inline-block;transform:scale(0.5);transform-origin:50% 50%;margin:0 -100px;">Ur4</span></div>
<div style="left:481px;top:493px;width:10px;height:6px;background:#404243;"></div>
<div style="left:481px;top:494px;width:10px;height:5px;line-height:5px;text-align:center;white-space:nowrap;font-size:7.6px;font-weight:bold;color:#eef0ff;letter-spacing:0px;"><span style="display:inline-block;transform:scale(0.5);transform-origin:50% 50%;margin:0 -100px;">Ur5</span></div>
<div style="left:481px;top:502px;width:10px;height:6px;background:#404243;"></div>
<div style="left:481px;top:503px;width:10px;height:5px;line-height:5px;text-align:center;white-space:nowrap;font-size:7.6px;font-weight:bold;color:#eef0ff;letter-spacing:0px;"><span style="display:inline-block;transform:scale(0.5);transform-origin:50% 50%;margin:0 -100px;">Ur6</span></div>
<div style="left:504px;top:454px;width:41px;height:20px;background:#4b4d4f;"></div>
<div style="left:504px;top:456px;width:41px;height:9px;line-height:9px;font-size:5.5px;color:#dfe8ff;text-align:center;white-space:nowrap;font-weight:bold;">LD1 &nbsp;&nbsp;&nbsp; LD2</div>
<div style="left:502px;top:465px;width:45px;height:9px;line-height:9px;font-size:5.5px;color:#dfe8ff;text-align:center;white-space:nowrap;font-weight:bold;"><span style="display:inline-block;transform:scaleX(1.0);transform-origin:50% 50%;">Температура</span></div>
<div style="left:508px;top:474px;width:34px;height:37px;background:#434546;"></div>
<div style="left:508px;top:475px;width:34px;height:16px;background:#545658;"></div>
<div style="left:508px;top:476px;width:34px;height:7px;line-height:7px;font-size:5px;color:#dfe8ff;text-align:center;white-space:nowrap;">Date</div>
<div style="left:508px;top:484px;width:34px;height:7px;line-height:7px;font-size:5px;color:#dfe8ff;text-align:center;white-space:nowrap;">Time</div>
<div style="left:449px;top:532px;width:49px;height:15px;background:#fff;"></div>
<div style="left:449px;top:532px;width:49px;height:15px;line-height:15px;font-size:5.5px;color:#1c2340;text-align:center;white-space:nowrap;font-weight:bold;"><span style="display:inline-block;transform:scaleX(0.9);transform-origin:50% 50%;">CUXXXXXX</span></div>
<div style="left:460px;top:554px;width:9px;height:9px;background:#b01018;border-radius:5px;border:1px solid #701010;"></div>
<div style="left:464px;top:551px;width:1px;height:3px;background:#222;"></div>
<div style="left:470px;top:558px;width:2px;height:2px;background:#222;"></div>
<div style="left:456px;top:569px;width:16px;height:18px;background:#5a5a5a;"></div>
<div style="left:459px;top:570px;width:12px;height:16px;background:#ff0000;"></div>
<div style="left:456px;top:573px;width:2px;height:8px;background:#2a5a3a;"></div>
<div style="left:452px;top:574px;width:2px;height:7px;background:repeating-linear-gradient(#222 0 1px,transparent 1px 2px);"></div>
<div style="left:456px;top:592px;width:16px;height:18px;background:#5a5a5a;"></div>
<div style="left:459px;top:593px;width:12px;height:16px;background:#ff0000;"></div>
<div style="left:456px;top:596px;width:2px;height:8px;background:#2a5a3a;"></div>
<div style="left:452px;top:597px;width:2px;height:7px;background:repeating-linear-gradient(#222 0 1px,transparent 1px 2px);"></div>
<div style="left:456px;top:615px;width:16px;height:18px;background:#5a5a5a;"></div>
<div style="left:459px;top:616px;width:12px;height:16px;background:#ff0000;"></div>
<div style="left:456px;top:619px;width:2px;height:8px;background:#2a5a3a;"></div>
<div style="left:452px;top:620px;width:2px;height:7px;background:repeating-linear-gradient(#222 0 1px,transparent 1px 2px);"></div>
<div style="left:456px;top:637px;width:16px;height:18px;background:#5a5a5a;"></div>
<div style="left:459px;top:638px;width:12px;height:16px;background:#ff0000;"></div>
<div style="left:456px;top:641px;width:2px;height:8px;background:#2a5a3a;"></div>
<div style="left:452px;top:642px;width:2px;height:7px;background:repeating-linear-gradient(#222 0 1px,transparent 1px 2px);"></div>
<div style="left:457px;top:665px;width:30px;height:12px;background:linear-gradient(#050505 0,#0a0a0a 62%,#2a2a2a 70%,#242424 90%,#0a0a0a 100%);border-radius:1px;"></div>
<div style="left:471px;top:666px;width:1px;height:11px;background:#3c3c3c;"></div>
<div style="left:457px;top:667px;width:30px;height:5px;line-height:5px;text-align:center;white-space:nowrap;font-size:8px;font-weight:bold;color:#e8e8e8;letter-spacing:0px;"><span style="display:inline-block;transform:scale(0.5);transform-origin:50% 50%;margin:0 -100px;">×.X.X.X.X</span></div>
<div style="left:527px;top:534px;width:10px;height:10px;background:#9a9a9a;border-radius:5px;border:1.5px solid #6e6e6e;"></div>
<div style="left:530px;top:537px;width:4px;height:4px;background:#bdbdbd;border-radius:2px;"></div>
<div style="left:525px;top:529px;width:14px;height:5px;line-height:5px;text-align:center;white-space:nowrap;font-size:6.4px;font-weight:bold;color:#222;letter-spacing:0px;"><span style="display:inline-block;transform:scale(0.5);transform-origin:50% 50%;margin:0 -100px;">RS-XX</span></div>
<div style="left:527px;top:556px;width:10px;height:20px;background:#6d6d6d;"></div>
<div style="left:529px;top:559px;width:5px;height:14px;background:#4a4a4a;"></div>
<div style="left:527px;top:582px;width:10px;height:20px;background:#6d6d6d;"></div>
<div style="left:529px;top:585px;width:5px;height:14px;background:#4a4a4a;"></div>
<div style="left:532px;top:550px;width:1px;height:1px;background:#222;"></div>
<div style="left:532px;top:578px;width:1px;height:1px;background:#222;"></div>
<div style="left:522px;top:615px;width:16px;height:18px;background:#5a5a5a;"></div>
<div style="left:525px;top:616px;width:12px;height:16px;background:#ff0000;"></div>
<div style="left:518px;top:620px;width:2px;height:7px;background:repeating-linear-gradient(#222 0 1px,transparent 1px 2px);"></div>
<div style="left:522px;top:637px;width:16px;height:18px;background:#5a5a5a;"></div>
<div style="left:525px;top:638px;width:12px;height:16px;background:#ff0000;"></div>
<div style="left:518px;top:642px;width:2px;height:7px;background:repeating-linear-gradient(#222 0 1px,transparent 1px 2px);"></div>
<div style="left:508px;top:665px;width:30px;height:12px;background:linear-gradient(#050505 0,#0a0a0a 62%,#2a2a2a 70%,#242424 90%,#0a0a0a 100%);border-radius:1px;"></div>
<div style="left:522px;top:666px;width:1px;height:11px;background:#3c3c3c;"></div>
<div style="left:552px;top:444px;width:51px;height:236px;background:#f3cf42;border:3px solid #ff0000;border-radius:9px;overflow:hidden;"><svg style="left:0;top:0" width="45" height="230"><rect width="45" height="230" filter="url(#nzy)"/></svg></div>
<div style="left:555px;top:447px;width:45px;height:66px;background:#3a3b3c;border-radius:6px 6px 0 0;"></div>
<div style="left:555px;top:513px;width:45px;height:1px;background:#3a3210;"></div>
<div style="left:559px;top:454px;width:38px;height:19px;background:#4b4d4f;"></div>
<div style="left:559px;top:457px;width:38px;height:5px;line-height:5px;text-align:center;white-space:nowrap;font-size:8px;font-weight:bold;color:#ffffff;letter-spacing:0px;"><span style="display:inline-block;transform:scale(0.5);transform-origin:50% 50%;margin:0 -100px;">ВААА &nbsp;Э7С/В.АЭ</span></div>
<div style="left:555px;top:463px;width:46px;height:11px;line-height:11px;font-size:8px;color:#fff;text-align:center;white-space:nowrap;text-shadow:0 0 0.4px #fff;"><span style="display:inline-block;transform:scaleX(0.78);transform-origin:50% 50%;">AI 08 8S1</span></div>
<div style="left:559px;top:479px;width:10px;height:5px;background:#ff0000;"></div>
<div style="left:559px;top:479px;width:10px;height:5px;line-height:5px;font-size:3.5px;color:#ffd0e0;text-align:center;white-space:nowrap;font-weight:bold;">HRK</div>
<div style="left:560px;top:507px;width:10px;height:5px;background:#3fe060;border:1px solid #1f3a25;"></div>
<div style="left:562px;top:508px;width:5px;height:2px;background:#1a7a30;"></div>
<div style="left:575px;top:474px;width:1px;height:38px;background:repeating-linear-gradient(#e4e4f0 0 3px,transparent 3px 5px);"></div>
<div style="left:579px;top:474px;width:15px;height:38px;border-left:1px solid #55554a;border-right:1px solid #55554a;background:repeating-linear-gradient(#5a5a4e 0 1px,#44453e 1px 5px);"></div>
<div style="left:586px;top:474px;width:1px;height:38px;background:repeating-linear-gradient(#3fc060 0 3px,transparent 3px 5px);"></div>
<div style="left:555px;top:515px;width:45px;height:15px;background:#fff;"></div>
<div style="left:555px;top:515px;width:45px;height:15px;line-height:15px;font-size:5px;color:#1c2340;text-align:center;white-space:nowrap;font-weight:bold;"><span style="display:inline-block;transform:scaleX(0.9);transform-origin:50% 50%;">AIXXXXXX</span></div>
<div style="left:555px;top:540px;width:45px;height:1px;background:#ffd52a;"></div>
<div style="left:555px;top:550px;width:45px;height:1px;background:#ffd52a;"></div>
<div style="left:555px;top:642px;width:8px;height:1px;background:#ffd52a;"></div>
<div style="left:555px;top:655px;width:8px;height:1px;background:#ffd52a;"></div>
<div style="left:558px;top:663px;width:39px;height:5px;line-height:5px;text-align:center;white-space:nowrap;font-size:8px;font-weight:bold;color:#55491a;letter-spacing:0px;"><span style="display:inline-block;transform:scale(0.5);transform-origin:50% 50%;margin:0 -100px;">×.XXX.X</span></div>
<div style="left:560px;top:672px;width:35px;height:3px;background:#0a0a0a;border-radius:3px 3px 1px 1px;"></div>
<div style="left:594px;top:667px;width:3px;height:3px;background:#333;"></div>
<div style="left:602px;top:444px;width:51px;height:236px;background:#f3cf42;border:3px solid #ff0000;border-radius:9px;overflow:hidden;"><svg style="left:0;top:0" width="45" height="230"><rect width="45" height="230" filter="url(#nzy)"/></svg></div>
<div style="left:605px;top:447px;width:45px;height:66px;background:#3a3b3c;border-radius:6px 6px 0 0;"></div>
<div style="left:605px;top:513px;width:45px;height:1px;background:#3a3210;"></div>
<div style="left:609px;top:454px;width:38px;height:19px;background:#4b4d4f;"></div>
<div style="left:609px;top:457px;width:38px;height:5px;line-height:5px;text-align:center;white-space:nowrap;font-size:8px;font-weight:bold;color:#ffffff;letter-spacing:0px;"><span style="display:inline-block;transform:scale(0.5);transform-origin:50% 50%;margin:0 -100px;">ВААА &nbsp;Э7С/В.АЭ</span></div>
<div style="left:605px;top:463px;width:46px;height:11px;line-height:11px;font-size:8px;color:#fff;text-align:center;white-space:nowrap;text-shadow:0 0 0.4px #fff;"><span style="display:inline-block;transform:scaleX(0.78);transform-origin:50% 50%;">AO 04 8S1</span></div>
<div style="left:609px;top:479px;width:10px;height:5px;background:#ff0000;"></div>
<div style="left:609px;top:479px;width:10px;height:5px;line-height:5px;font-size:3.5px;color:#ffd0e0;text-align:center;white-space:nowrap;font-weight:bold;">HRK</div>
<div style="left:610px;top:507px;width:10px;height:5px;background:#3fe060;border:1px solid #1f3a25;"></div>
<div style="left:612px;top:508px;width:5px;height:2px;background:#1a7a30;"></div>
<div style="left:625px;top:474px;width:1px;height:38px;background:repeating-linear-gradient(#e4e4f0 0 3px,transparent 3px 5px);"></div>
<div style="left:629px;top:474px;width:15px;height:38px;border-left:1px solid #55554a;border-right:1px solid #55554a;background:repeating-linear-gradient(#5a5a4e 0 1px,#44453e 1px 5px);"></div>
<div style="left:636px;top:474px;width:1px;height:38px;background:repeating-linear-gradient(#3fc060 0 3px,transparent 3px 5px);"></div>
<div style="left:605px;top:515px;width:45px;height:15px;background:#fff;"></div>
<div style="left:605px;top:515px;width:45px;height:15px;line-height:15px;font-size:5px;color:#1c2340;text-align:center;white-space:nowrap;font-weight:bold;"><span style="display:inline-block;transform:scaleX(0.9);transform-origin:50% 50%;">AOXXXXXX</span></div>
<div style="left:605px;top:540px;width:45px;height:1px;background:#ffd52a;"></div>
<div style="left:605px;top:550px;width:45px;height:1px;background:#ffd52a;"></div>
<div style="left:605px;top:642px;width:8px;height:1px;background:#ffd52a;"></div>
<div style="left:605px;top:655px;width:8px;height:1px;background:#ffd52a;"></div>
<div style="left:608px;top:663px;width:39px;height:5px;line-height:5px;text-align:center;white-space:nowrap;font-size:8px;font-weight:bold;color:#55491a;letter-spacing:0px;"><span style="display:inline-block;transform:scale(0.5);transform-origin:50% 50%;margin:0 -100px;">×.XXX.X</span></div>
<div style="left:610px;top:672px;width:35px;height:3px;background:#0a0a0a;border-radius:3px 3px 1px 1px;"></div>
<div style="left:644px;top:667px;width:3px;height:3px;background:#333;"></div>
<div style="left:652px;top:444px;width:51px;height:236px;background:#f3cf42;border:3px solid #ff0000;border-radius:9px;overflow:hidden;"><svg style="left:0;top:0" width="45" height="230"><rect width="45" height="230" filter="url(#nzy)"/></svg></div>
<div style="left:655px;top:447px;width:45px;height:66px;background:#3a3b3c;border-radius:6px 6px 0 0;"></div>
<div style="left:655px;top:513px;width:45px;height:1px;background:#3a3210;"></div>
<div style="left:659px;top:454px;width:38px;height:19px;background:#4b4d4f;"></div>
<div style="left:659px;top:457px;width:38px;height:5px;line-height:5px;text-align:center;white-space:nowrap;font-size:8px;font-weight:bold;color:#ffffff;letter-spacing:0px;"><span style="display:inline-block;transform:scale(0.5);transform-origin:50% 50%;margin:0 -100px;">ВААА &nbsp;Э7С/В.АЭ</span></div>
<div style="left:655px;top:463px;width:46px;height:11px;line-height:11px;font-size:8px;color:#fff;text-align:center;white-space:nowrap;text-shadow:0 0 0.4px #fff;"><span style="display:inline-block;transform:scaleX(0.78);transform-origin:50% 50%;">DI 23 811</span></div>
<div style="left:659px;top:479px;width:10px;height:5px;background:#ff0000;"></div>
<div style="left:659px;top:479px;width:10px;height:5px;line-height:5px;font-size:3.5px;color:#ffd0e0;text-align:center;white-space:nowrap;font-weight:bold;">HRK</div>
<div style="left:660px;top:507px;width:10px;height:5px;background:#3fe060;border:1px solid #1f3a25;"></div>
<div style="left:662px;top:508px;width:5px;height:2px;background:#1a7a30;"></div>
<div style="left:675px;top:475px;width:1px;height:36px;background:repeating-linear-gradient(#e4e4f0 0 3px,transparent 3px 5.3px);"></div>
<div style="left:681px;top:475px;width:1px;height:36px;background:repeating-linear-gradient(#e4e4f0 0 3px,transparent 3px 5.3px);"></div>
<div style="left:687px;top:475px;width:1px;height:36px;background:repeating-linear-gradient(#e4e4f0 0 3px,transparent 3px 5.3px);"></div>
<div style="left:693px;top:475px;width:1px;height:36px;background:repeating-linear-gradient(#e4e4f0 0 3px,transparent 3px 5.3px);"></div>
<div style="left:655px;top:515px;width:45px;height:15px;background:#fff;"></div>
<div style="left:655px;top:515px;width:45px;height:15px;line-height:15px;font-size:5px;color:#1c2340;text-align:center;white-space:nowrap;font-weight:bold;"><span style="display:inline-block;transform:scaleX(0.9);transform-origin:50% 50%;">DIXXXXXX</span></div>
<div style="left:655px;top:540px;width:45px;height:1px;background:#ffd52a;"></div>
<div style="left:655px;top:550px;width:45px;height:1px;background:#ffd52a;"></div>
<div style="left:655px;top:642px;width:8px;height:1px;background:#ffd52a;"></div>
<div style="left:655px;top:655px;width:8px;height:1px;background:#ffd52a;"></div>
<div style="left:658px;top:663px;width:39px;height:5px;line-height:5px;text-align:center;white-space:nowrap;font-size:8px;font-weight:bold;color:#55491a;letter-spacing:0px;"><span style="display:inline-block;transform:scale(0.5);transform-origin:50% 50%;margin:0 -100px;">×.XXX.X</span></div>
<div style="left:660px;top:672px;width:35px;height:3px;background:#0a0a0a;border-radius:3px 3px 1px 1px;"></div>
<div style="left:694px;top:667px;width:3px;height:3px;background:#333;"></div>
<div style="left:702px;top:444px;width:51px;height:236px;background:#f3cf42;border:3px solid #ff0000;border-radius:9px;overflow:hidden;"><svg style="left:0;top:0" width="45" height="230"><rect width="45" height="230" filter="url(#nzy)"/></svg></div>
<div style="left:705px;top:447px;width:45px;height:66px;background:#3a3b3c;border-radius:6px 6px 0 0;"></div>
<div style="left:705px;top:513px;width:45px;height:1px;background:#3a3210;"></div>
<div style="left:709px;top:454px;width:38px;height:19px;background:#4b4d4f;"></div>
<div style="left:709px;top:457px;width:38px;height:5px;line-height:5px;text-align:center;white-space:nowrap;font-size:8px;font-weight:bold;color:#ffffff;letter-spacing:0px;"><span style="display:inline-block;transform:scale(0.5);transform-origin:50% 50%;margin:0 -100px;">ВААА &nbsp;Э7С/В.АЭ</span></div>
<div style="left:705px;top:463px;width:46px;height:11px;line-height:11px;font-size:8px;color:#fff;text-align:center;white-space:nowrap;text-shadow:0 0 0.4px #fff;"><span style="display:inline-block;transform:scaleX(0.78);transform-origin:50% 50%;">DO 16 811</span></div>
<div style="left:709px;top:479px;width:10px;height:5px;background:#ff0000;"></div>
<div style="left:709px;top:479px;width:10px;height:5px;line-height:5px;font-size:3.5px;color:#ffd0e0;text-align:center;white-space:nowrap;font-weight:bold;">HRK</div>
<div style="left:710px;top:507px;width:10px;height:5px;background:#3fe060;border:1px solid #1f3a25;"></div>
<div style="left:712px;top:508px;width:5px;height:2px;background:#1a7a30;"></div>
<div style="left:724px;top:474px;width:1px;height:38px;background:repeating-linear-gradient(#e4e4f0 0 3px,transparent 3px 5px);"></div>
<div style="left:737px;top:474px;width:1px;height:38px;background:repeating-linear-gradient(#e4e4f0 0 3px,transparent 3px 5px);"></div>
<div style="left:705px;top:515px;width:45px;height:15px;background:#fff;"></div>
<div style="left:705px;top:515px;width:45px;height:15px;line-height:15px;font-size:5px;color:#1c2340;text-align:center;white-space:nowrap;font-weight:bold;"><span style="display:inline-block;transform:scaleX(0.9);transform-origin:50% 50%;">DOXXXXXXX</span></div>
<div style="left:705px;top:540px;width:45px;height:1px;background:#ffd52a;"></div>
<div style="left:705px;top:550px;width:45px;height:1px;background:#ffd52a;"></div>
<div style="left:705px;top:642px;width:8px;height:1px;background:#ffd52a;"></div>
<div style="left:705px;top:655px;width:8px;height:1px;background:#ffd52a;"></div>
<div style="left:708px;top:663px;width:39px;height:5px;line-height:5px;text-align:center;white-space:nowrap;font-size:8px;font-weight:bold;color:#55491a;letter-spacing:0px;"><span style="display:inline-block;transform:scale(0.5);transform-origin:50% 50%;margin:0 -100px;">×.XXX.X</span></div>
<div style="left:710px;top:672px;width:35px;height:3px;background:#0a0a0a;border-radius:3px 3px 1px 1px;"></div>
<div style="left:744px;top:667px;width:3px;height:3px;background:#333;"></div>
<div style="left:753px;top:493px;width:43px;height:138px;background:#272727;border-radius:21px 21px 21px 21px / 5px 5px 5px 5px;"></div>
<div style="left:753px;top:493px;width:43px;height:22px;background:#232323;border-radius:21px 21px 0 0 / 5px 5px 0 0;"></div>
<div style="left:753px;top:609px;width:43px;height:22px;background:#232323;border-radius:0 0 21px 21px / 0 0 5px 5px;"></div>
<div style="left:755px;top:515px;width:39px;height:2px;background:#393939;"></div>
<div style="left:755px;top:607px;width:39px;height:2px;background:#393939;"></div>
<div style="left:755px;top:517px;width:10px;height:90px;background:linear-gradient(#0d0d0d 0,#2b2b2b 22%,#2b2b2b 70%,#0d0d0d 100%);"></div>
<div style="left:784px;top:517px;width:10px;height:90px;background:linear-gradient(#0d0d0d 0,#2b2b2b 22%,#2b2b2b 70%,#0d0d0d 100%);"></div>
<div style="left:765px;top:517px;width:19px;height:90px;background:#171717;"></div>
<div style="left:765px;top:517px;width:19px;height:3px;background:#0a0a0a;"></div>
<div style="left:753px;top:498px;width:2px;height:8px;background:#050505;border-radius:0 2px 2px 0;"></div>
<div style="left:794px;top:498px;width:2px;height:8px;background:#050505;border-radius:2px 0 0 2px;"></div>
<div style="left:753px;top:618px;width:2px;height:8px;background:#050505;border-radius:0 2px 2px 0;"></div>
<div style="left:794px;top:618px;width:2px;height:8px;background:#050505;border-radius:2px 0 0 2px;"></div>
<div style="left:768px;top:500px;width:3px;height:5px;background:#050505;"></div>
<div style="left:778px;top:500px;width:3px;height:5px;background:#050505;"></div>
<div style="left:768px;top:620px;width:3px;height:5px;background:#050505;"></div>
<div style="left:778px;top:620px;width:3px;height:5px;background:#050505;"></div>
<div style="left:771.5px;top:504.5px;width:7px;height:7px;background:#0c0c0c;border-radius:3.5px;"></div>
<div style="left:772.5px;top:505.5px;width:5px;height:5px;background:#aeaaac;border-radius:2.5px;"></div>
<div style="left:774px;top:506.5px;width:2px;height:2px;background:#d0cccf;border-radius:1px;"></div>
<div style="left:771.5px;top:612.5px;width:7px;height:7px;background:#0c0c0c;border-radius:3.5px;"></div>
<div style="left:772.5px;top:613.5px;width:5px;height:5px;background:#aeaaac;border-radius:2.5px;"></div>
<div style="left:774px;top:614.5px;width:2px;height:2px;background:#d0cccf;border-radius:1px;"></div>
<div style="left:766px;top:520px;width:17px;height:18px;background:#cfcfd1;"></div>
<div style="left:767px;top:526px;width:15px;height:10px;background:#1a1a1a;"></div>
<div style="left:768px;top:526px;width:14px;height:9px;background:#ff0000;"></div>
<div style="left:766px;top:587px;width:17px;height:17px;background:#cfcfd1;"></div>
<div style="left:767px;top:589px;width:15px;height:10px;background:#1a1a1a;"></div>
<div style="left:768px;top:589px;width:14px;height:9px;background:#ff0000;"></div>
<div style="left:766px;top:539px;width:6px;height:3px;background:#f02030;"></div>
<div style="left:773px;top:539px;width:3px;height:3px;background:#e8e8e8;"></div>
<div style="left:766px;top:582px;width:6px;height:3px;background:#f02030;"></div>
<div style="left:773px;top:581px;width:3px;height:3px;background:#e8e8e8;"></div>
<div style="left:758px;top:551px;width:2px;height:20px;background:repeating-linear-gradient(#9a9a9a 0 1px,transparent 1px 2px);"></div>
<div style="left:787px;top:559px;width:2px;height:16px;background:repeating-linear-gradient(#9a9a9a 0 1px,transparent 1px 2px);"></div>
<div style="left:771px;top:550px;width:10px;height:5px;line-height:5px;font-size:3.5px;color:#ddd;text-align:center;white-space:nowrap;font-weight:bold;">XP</div>
<div style="left:1009px;top:180px;width:279px;height:20px;background:#c0c0c0;border:1px solid #0c0c0c;border-radius:1px;box-shadow:inset 0 0 0 1px rgba(255,255,255,0.3);"></div>
<div style="left:1009px;top:180px;width:279px;height:20px;line-height:20px;font-size:10.5px;color:#000;text-align:center;white-space:nowrap;font-weight:bold;letter-spacing:0.6px;">NAME</div>
<div style="left:1009px;top:203px;width:279px;height:121px;background:#c0c0c0;border:1px solid #0c0c0c;border-radius:1px;box-shadow:inset 0 0 0 1px rgba(255,255,255,0.3);"></div>
<div style="left:1015px;top:210px;width:188px;height:106px;background:#000;"></div>
<div style="left:1015px;top:224px;width:188px;height:24px;overflow:hidden;"><div style="left:0;top:-7.5px;width:98px;height:20px;line-height:20px;font-size:16px;font-weight:bold;color:#fff;text-align:center;letter-spacing:1px;">CPU</div><div style="left:0;top:14.2px;width:98px;height:20px;line-height:20px;font-size:16px;font-weight:bold;color:#fff;text-align:center;letter-spacing:1px;">LOAD</div></div>
<div style="left:1208px;top:206px;width:36px;height:36px;background:#7d7d7d;border-radius:3px;border:1px solid #969696;"></div>
<svg style="left:1208px;top:206px" width="36" height="26" viewBox="0 0 36 26"><path d="M16.6 4.8 L4 17.8 L4 24 L16.6 24 Z" fill="#d9d9d9"/><path d="M18.7 4.8 L30.9 4.8 L30.9 12.2 L19.6 24 L18.7 24 Z" fill="#fff"/><path d="M30.9 15.6 L30.9 24 L23.6 24 Z" fill="#b5b5b5"/></svg>
<div style="left:1208px;top:234px;width:36px;height:7px;line-height:7px;font-size:5.4px;color:#fff;text-align:center;white-space:nowrap;font-weight:bold;letter-spacing:0.2px;">EXPLORER</div>
<div style="left:1208px;top:245px;width:36px;height:36px;background:#3f473c;border-radius:3px;border:1px solid #50633f;"></div>
<svg style="left:1208px;top:245px" width="36" height="26" viewBox="0 0 36 26"><path d="M16.6 4.8 L4 17.8 L4 24 L16.6 24 Z" fill="#d9d9d9"/><path d="M18.7 4.8 L30.9 4.8 L30.9 12.2 L19.6 24 L18.7 24 Z" fill="#fff"/><path d="M30.9 15.6 L30.9 24 L23.6 24 Z" fill="#b5b5b5"/></svg>
<div style="left:1208px;top:272px;width:36px;height:7px;line-height:7px;font-size:5.4px;color:#fff;text-align:center;white-space:nowrap;font-weight:bold;letter-spacing:0.2px;">SECURITY</div>
<div style="left:1208px;top:284px;width:36px;height:36px;background:#0f8588;border-radius:3px;border:1px solid #1a9799;"></div>
<svg style="left:1208px;top:284px" width="36" height="26" viewBox="0 0 36 26"><path d="M16.6 4.8 L4 17.8 L4 24 L16.6 24 Z" fill="#cfeaea"/><path d="M18.7 4.8 L30.9 4.8 L30.9 12.2 L19.6 24 L18.7 24 Z" fill="#fff"/><path d="M30.9 15.6 L30.9 24 L23.6 24 Z" fill="#8fcfcf"/></svg>
<div style="left:1208px;top:312px;width:36px;height:7px;line-height:7px;font-size:5.4px;color:#fff;text-align:center;white-space:nowrap;font-weight:bold;letter-spacing:0.2px;">INTEGRITY</div>
<div style="left:1248px;top:206px;width:36px;height:36px;background:#26272b;border-radius:3px;border:1px solid #55565a;"></div>
<svg style="left:1248px;top:213px" width="36" height="26" viewBox="0 0 36 26"><path d="M16.6 4.8 L4 17.8 L4 24 L16.6 24 Z" fill="#d9d9d9"/><path d="M18.7 4.8 L30.9 4.8 L30.9 12.2 L19.6 24 L18.7 24 Z" fill="#fff"/><path d="M30.9 15.6 L30.9 24 L23.6 24 Z" fill="#b5b5b5"/></svg>
<div style="left:1257px;top:206px;width:27px;height:9px;background:#2f8f3c;border-radius:0 3px 0 0;"></div>
<div style="left:1257px;top:206px;width:27px;height:9px;line-height:9px;font-size:6.5px;color:#fff;text-align:center;white-space:nowrap;font-weight:bold;letter-spacing:0.4px;">STAT</div>
<div style="left:1009px;top:326px;width:136px;height:16px;background:#e8e8e8;border:1px solid #0c0c0c;border-radius:1px;box-shadow:inset 0 0 0 1px rgba(255,255,255,0.3);"></div>
<div style="left:1009px;top:326px;width:136px;height:16px;line-height:16px;font-size:10.5px;color:#111;text-align:center;white-space:nowrap;letter-spacing:0.5px;">IP1</div>
<div style="left:1152px;top:326px;width:136px;height:16px;background:#e8e8e8;border:1px solid #0c0c0c;border-radius:1px;box-shadow:inset 0 0 0 1px rgba(255,255,255,0.3);"></div>
<div style="left:1152px;top:326px;width:136px;height:16px;line-height:16px;font-size:10.5px;color:#111;text-align:center;white-space:nowrap;letter-spacing:0.5px;">IP2</div>
<div style="left:1321px;top:184px;width:91px;height:19px;background:#c0c0c0;border:1px solid #0c0c0c;border-radius:1px;box-shadow:inset 0 0 0 1px rgba(255,255,255,0.3);"></div>
<div style="left:1321px;top:184px;width:91px;height:19px;line-height:19px;font-size:10.5px;color:#000;text-align:center;white-space:nowrap;font-weight:bold;letter-spacing:0.6px;">NAME</div>
<div style="left:1321px;top:206px;width:91px;height:76px;background:#c0c0c0;border:1px solid #0c0c0c;border-radius:1px;box-shadow:inset 0 0 0 1px rgba(255,255,255,0.3);"></div>
<div style="left:1325px;top:209.5px;width:83px;height:68px;background:#55ff80;border:1px solid #1f5030;"></div>
<div style="left:1325px;top:217.5px;width:83px;height:14px;line-height:14px;font-size:10px;color:#000;text-align:center;white-space:nowrap;font-weight:bold;letter-spacing:0.5px;">NAME</div>
<div style="left:1325px;top:244px;width:83px;height:14px;line-height:14px;font-size:10px;color:#000;text-align:center;white-space:nowrap;font-weight:bold;letter-spacing:0.8px;">CPU LOAD</div>
<div style="left:1362px;top:282px;width:9px;height:15px;background:#a6a6a6;border-left:1px solid #2a2a2a;border-right:1px solid #2a2a2a;"></div>
<div style="left:1337px;top:296px;width:60px;height:7px;background:#c0c0c0;border:1px solid #2a2a2a;"></div>
<div style="left:1321px;top:305px;width:91px;height:16px;background:#e8e8e8;border:1px solid #0c0c0c;border-radius:1px;box-shadow:inset 0 0 0 1px rgba(255,255,255,0.3);"></div>
<div style="left:1321px;top:306.5px;width:91px;height:15px;line-height:15px;font-size:10px;color:#111;text-align:center;white-space:nowrap;letter-spacing:0.5px;">IP1</div>
<div style="left:1321px;top:323.5px;width:91px;height:16px;background:#e8e8e8;border:1px solid #0c0c0c;border-radius:1px;box-shadow:inset 0 0 0 1px rgba(255,255,255,0.3);"></div>
<div style="left:1321px;top:324px;width:91px;height:15px;line-height:15px;font-size:10px;color:#111;text-align:center;white-space:nowrap;letter-spacing:0.5px;">IP2</div>
<div style="left:885px;top:419px;width:527px;height:190px;background:#a9a9a9;border:2px solid #0a0a0a;"></div>
<div style="left:887px;top:421px;width:523px;height:21px;background:#8c8c8c;"></div>
<div style="left:887px;top:442px;width:523px;height:2px;background:#0a0a0a;"></div>
<div style="left:887px;top:421px;width:523px;height:22px;line-height:22px;font-size:13.5px;color:#000;text-align:center;white-space:nowrap;font-weight:bold;letter-spacing:0.57px;">РЕЗЕРВИРОВАННАЯ ПАРА СЕРВЕРОВ</div>
<div style="left:901px;top:458px;width:241px;height:121px;background:#c0c0c0;border:1px solid #1a1a1a;"></div>
<div style="left:901px;top:480px;width:241px;height:1px;background:#1a1a1a;"></div>
<div style="left:901px;top:555px;width:241px;height:1px;background:#1a1a1a;"></div>
<div style="left:901px;top:459px;width:241px;height:21px;line-height:21px;font-size:10.5px;color:#000;text-align:center;white-space:nowrap;font-weight:bold;letter-spacing:0.6px;">NAME</div>
<div style="left:901px;top:556.5px;width:241px;height:21px;line-height:21px;font-size:10.5px;color:#000;text-align:center;white-space:nowrap;font-weight:bold;letter-spacing:0.6px;">STATE</div>
<div style="left:902px;top:481px;width:89px;height:18px;background:#e7e7e7;"></div>
<div style="left:902px;top:480.5px;width:89px;height:18px;line-height:18px;font-size:10.5px;color:#111;text-align:center;white-space:nowrap;letter-spacing:0.6px;">IP1</div>
<div style="left:902px;top:499px;width:89px;height:19px;background:#e7e7e7;"></div>
<div style="left:902px;top:499px;width:89px;height:1px;background:#1a1a1a;"></div>
<div style="left:902px;top:498.5px;width:89px;height:19px;line-height:19px;font-size:10.5px;color:#111;text-align:center;white-space:nowrap;letter-spacing:0.6px;">IP2</div>
<div style="left:902px;top:518px;width:89px;height:19px;background:#e7e7e7;"></div>
<div style="left:902px;top:518px;width:89px;height:1px;background:#1a1a1a;"></div>
<div style="left:902px;top:517.5px;width:89px;height:19px;line-height:19px;font-size:10.5px;color:#111;text-align:center;white-space:nowrap;letter-spacing:0.6px;">IP3</div>
<div style="left:902px;top:537px;width:89px;height:18px;background:#e7e7e7;"></div>
<div style="left:902px;top:537px;width:89px;height:1px;background:#1a1a1a;"></div>
<div style="left:902px;top:536.5px;width:89px;height:18px;line-height:18px;font-size:10.5px;color:#111;text-align:center;white-space:nowrap;letter-spacing:0.6px;">IP4</div>
<div style="left:991px;top:481px;width:150px;height:74px;background:#55ff80;"></div>
<div style="left:1081px;top:481px;width:1px;height:74px;background:#1f7a3a;"></div>
<div style="left:991px;top:481px;width:1px;height:74px;background:#1f7a3a;"></div>
<div style="left:992px;top:493px;width:89px;height:14px;line-height:14px;font-size:10px;color:#000;text-align:center;white-space:nowrap;font-weight:bold;"><span style="display:inline-block;transform:scaleX(0.94);transform-origin:50% 50%;">DISC1</span></div>
<div style="left:992px;top:531px;width:89px;height:14px;line-height:14px;font-size:10px;color:#000;text-align:center;white-space:nowrap;font-weight:bold;"><span style="display:inline-block;transform:scaleX(0.94);transform-origin:50% 50%;">DISC2</span></div>
<div style="left:1082px;top:493.5px;width:59px;height:14px;line-height:14px;font-size:10px;color:#000;text-align:center;white-space:nowrap;font-weight:bold;letter-spacing:0.8px;">LOAD1</div>
<div style="left:1082px;top:531px;width:59px;height:14px;line-height:14px;font-size:10px;color:#000;text-align:center;white-space:nowrap;font-weight:bold;letter-spacing:0.8px;">LOAD2</div>
<div style="left:1156px;top:458px;width:241px;height:121px;background:#c0c0c0;border:1px solid #1a1a1a;"></div>
<div style="left:1156px;top:480px;width:241px;height:1px;background:#1a1a1a;"></div>
<div style="left:1156px;top:555px;width:241px;height:1px;background:#1a1a1a;"></div>
<div style="left:1156px;top:459px;width:241px;height:21px;line-height:21px;font-size:10.5px;color:#000;text-align:center;white-space:nowrap;font-weight:bold;letter-spacing:0.6px;">NAME</div>
<div style="left:1156px;top:556.5px;width:241px;height:21px;line-height:21px;font-size:10.5px;color:#000;text-align:center;white-space:nowrap;font-weight:bold;letter-spacing:0.6px;">STATE</div>
<div style="left:1157px;top:481px;width:89px;height:18px;background:#e7e7e7;"></div>
<div style="left:1157px;top:480.5px;width:89px;height:18px;line-height:18px;font-size:10.5px;color:#111;text-align:center;white-space:nowrap;letter-spacing:0.6px;">IP1</div>
<div style="left:1157px;top:499px;width:89px;height:19px;background:#e7e7e7;"></div>
<div style="left:1157px;top:499px;width:89px;height:1px;background:#1a1a1a;"></div>
<div style="left:1157px;top:498.5px;width:89px;height:19px;line-height:19px;font-size:10.5px;color:#111;text-align:center;white-space:nowrap;letter-spacing:0.6px;">IP2</div>
<div style="left:1157px;top:518px;width:89px;height:19px;background:#e7e7e7;"></div>
<div style="left:1157px;top:518px;width:89px;height:1px;background:#1a1a1a;"></div>
<div style="left:1157px;top:517.5px;width:89px;height:19px;line-height:19px;font-size:10.5px;color:#111;text-align:center;white-space:nowrap;letter-spacing:0.6px;">IP3</div>
<div style="left:1157px;top:537px;width:89px;height:18px;background:#e7e7e7;"></div>
<div style="left:1157px;top:537px;width:89px;height:1px;background:#1a1a1a;"></div>
<div style="left:1157px;top:536.5px;width:89px;height:18px;line-height:18px;font-size:10.5px;color:#111;text-align:center;white-space:nowrap;letter-spacing:0.6px;">IP4</div>
<div style="left:1246px;top:481px;width:150px;height:74px;background:#55ff80;"></div>
<div style="left:1336px;top:481px;width:1px;height:74px;background:#1f7a3a;"></div>
<div style="left:1246px;top:481px;width:1px;height:74px;background:#1f7a3a;"></div>
<div style="left:1247px;top:493px;width:89px;height:14px;line-height:14px;font-size:10px;color:#000;text-align:center;white-space:nowrap;font-weight:bold;"><span style="display:inline-block;transform:scaleX(0.94);transform-origin:50% 50%;">DISC1</span></div>
<div style="left:1247px;top:531px;width:89px;height:14px;line-height:14px;font-size:10px;color:#000;text-align:center;white-space:nowrap;font-weight:bold;"><span style="display:inline-block;transform:scaleX(0.94);transform-origin:50% 50%;">DISC2</span></div>
<div style="left:1337px;top:493.5px;width:59px;height:14px;line-height:14px;font-size:10px;color:#000;text-align:center;white-space:nowrap;font-weight:bold;letter-spacing:0.8px;">LOAD1</div>
<div style="left:1337px;top:531px;width:59px;height:14px;line-height:14px;font-size:10px;color:#000;text-align:center;white-space:nowrap;font-weight:bold;letter-spacing:0.8px;">LOAD2</div>
<div style="left:1111px;top:585.5px;width:74px;height:17px;background:#acacac;border:1px solid #1a1a1a;"></div>
<div style="left:1111px;top:584.5px;width:74px;height:17px;line-height:17px;font-size:11.7px;color:#000;text-align:center;white-space:nowrap;">Переключить</div>
<div style="left:982px;top:621px;width:91px;height:38px;background:#1c1c1c;"></div>
<div style="left:983px;top:622px;width:89px;height:18px;background:#c0c0c0;"></div>
<div style="left:983px;top:641px;width:89px;height:17px;background:#e4e4e4;"></div>
<div style="left:983px;top:622.5px;width:89px;height:18px;line-height:18px;font-size:10px;color:#000018;text-align:center;white-space:nowrap;font-weight:bold;">Name</div>
<div style="left:983px;top:641.5px;width:89px;height:17px;line-height:17px;font-size:10px;color:#000018;text-align:center;white-space:nowrap;">IP</div>
<div style="left:1073px;top:622px;width:241px;height:36px;background:#e1e1e1;"></div>
<svg style="left:1073px;top:622px" width="241" height="36" viewBox="0 0 241 36" shape-rendering="crispEdges"><rect x="7" y="6" width="15" height="11" fill="#efefef"/><path transform="translate(6.5,6)" d="M2.5 11 L2.5 5.5 L4.5 3.5 L5.5 3.5 L5.5 1.2 L10.5 1.2 L10.5 3.5 L11.5 3.5 L13.5 5.5 L13.5 11 Z" fill="#b9b9b9"/><rect x="6" y="6" width="1" height="11" fill="#3a3a3a"/><rect x="7" y="20" width="15" height="11" fill="#efefef"/><path transform="translate(6.5,20)" d="M2.5 11 L2.5 5.5 L4.5 3.5 L5.5 3.5 L5.5 1.2 L10.5 1.2 L10.5 3.5 L11.5 3.5 L13.5 5.5 L13.5 11 Z" fill="#b9b9b9"/><rect x="6" y="20" width="1" height="11" fill="#3a3a3a"/><rect x="6" y="17" width="16" height="1" fill="#3a3a3a"/><rect x="6" y="19" width="16" height="1" fill="#3a3a3a"/><rect x="25" y="6" width="15" height="11" fill="#efefef"/><path transform="translate(24.5,6)" d="M2.5 11 L2.5 5.5 L4.5 3.5 L5.5 3.5 L5.5 1.2 L10.5 1.2 L10.5 3.5 L11.5 3.5 L13.5 5.5 L13.5 11 Z" fill="#b9b9b9"/><rect x="24" y="6" width="1" height="11" fill="#3a3a3a"/><rect x="25" y="20" width="15" height="11" fill="#efefef"/><path transform="translate(24.5,20)" d="M2.5 11 L2.5 5.5 L4.5 3.5 L5.5 3.5 L5.5 1.2 L10.5 1.2 L10.5 3.5 L11.5 3.5 L13.5 5.5 L13.5 11 Z" fill="#b9b9b9"/><rect x="24" y="20" width="1" height="11" fill="#3a3a3a"/><rect x="24" y="17" width="16" height="1" fill="#3a3a3a"/><rect x="24" y="19" width="16" height="1" fill="#3a3a3a"/><rect x="45" y="6" width="15" height="11" fill="#efefef"/><path transform="translate(44.5,6)" d="M2.5 11 L2.5 5.5 L4.5 3.5 L5.5 3.5 L5.5 1.2 L10.5 1.2 L10.5 3.5 L11.5 3.5 L13.5 5.5 L13.5 11 Z" fill="#b9b9b9"/><rect x="60" y="6" width="1" height="11" fill="#3a3a3a"/><rect x="45" y="20" width="15" height="11" fill="#efefef"/><path transform="translate(44.5,20)" d="M2.5 11 L2.5 5.5 L4.5 3.5 L5.5 3.5 L5.5 1.2 L10.5 1.2 L10.5 3.5 L11.5 3.5 L13.5 5.5 L13.5 11 Z" fill="#b9b9b9"/><rect x="60" y="20" width="1" height="11" fill="#3a3a3a"/><rect x="45" y="17" width="16" height="1" fill="#3a3a3a"/><rect x="45" y="19" width="16" height="1" fill="#3a3a3a"/><rect x="62" y="6" width="15" height="11" fill="#efefef"/><path transform="translate(61.5,6)" d="M2.5 11 L2.5 5.5 L4.5 3.5 L5.5 3.5 L5.5 1.2 L10.5 1.2 L10.5 3.5 L11.5 3.5 L13.5 5.5 L13.5 11 Z" fill="#b9b9b9"/><rect x="77" y="6" width="1" height="11" fill="#3a3a3a"/><rect x="62" y="20" width="15" height="11" fill="#efefef"/><path transform="translate(61.5,20)" d="M2.5 11 L2.5 5.5 L4.5 3.5 L5.5 3.5 L5.5 1.2 L10.5 1.2 L10.5 3.5 L11.5 3.5 L13.5 5.5 L13.5 11 Z" fill="#b9b9b9"/><rect x="77" y="20" width="1" height="11" fill="#3a3a3a"/><rect x="62" y="17" width="16" height="1" fill="#3a3a3a"/><rect x="62" y="19" width="16" height="1" fill="#3a3a3a"/><rect x="86" y="6" width="15" height="11" fill="#efefef"/><path transform="translate(85.5,6)" d="M2.5 11 L2.5 5.5 L4.5 3.5 L5.5 3.5 L5.5 1.2 L10.5 1.2 L10.5 3.5 L11.5 3.5 L13.5 5.5 L13.5 11 Z" fill="#b9b9b9"/><rect x="101" y="6" width="1" height="11" fill="#3a3a3a"/><rect x="86" y="20" width="15" height="11" fill="#efefef"/><path transform="translate(85.5,20)" d="M2.5 11 L2.5 5.5 L4.5 3.5 L5.5 3.5 L5.5 1.2 L10.5 1.2 L10.5 3.5 L11.5 3.5 L13.5 5.5 L13.5 11 Z" fill="#b9b9b9"/><rect x="101" y="20" width="1" height="11" fill="#3a3a3a"/><rect x="86" y="17" width="16" height="1" fill="#3a3a3a"/><rect x="86" y="19" width="16" height="1" fill="#3a3a3a"/><rect x="104" y="6" width="15" height="11" fill="#efefef"/><path transform="translate(103.5,6)" d="M2.5 11 L2.5 5.5 L4.5 3.5 L5.5 3.5 L5.5 1.2 L10.5 1.2 L10.5 3.5 L11.5 3.5 L13.5 5.5 L13.5 11 Z" fill="#b9b9b9"/><rect x="119" y="6" width="1" height="11" fill="#3a3a3a"/><rect x="104" y="20" width="15" height="11" fill="#efefef"/><path transform="translate(103.5,20)" d="M2.5 11 L2.5 5.5 L4.5 3.5 L5.5 3.5 L5.5 1.2 L10.5 1.2 L10.5 3.5 L11.5 3.5 L13.5 5.5 L13.5 11 Z" fill="#b9b9b9"/><rect x="119" y="20" width="1" height="11" fill="#3a3a3a"/><rect x="104" y="17" width="16" height="1" fill="#3a3a3a"/><rect x="104" y="19" width="16" height="1" fill="#3a3a3a"/><rect x="123" y="6" width="15" height="11" fill="#efefef"/><path transform="translate(122.5,6)" d="M2.5 11 L2.5 5.5 L4.5 3.5 L5.5 3.5 L5.5 1.2 L10.5 1.2 L10.5 3.5 L11.5 3.5 L13.5 5.5 L13.5 11 Z" fill="#b9b9b9"/><rect x="122" y="6" width="1" height="11" fill="#3a3a3a"/><rect x="123" y="20" width="15" height="11" fill="#efefef"/><path transform="translate(122.5,20)" d="M2.5 11 L2.5 5.5 L4.5 3.5 L5.5 3.5 L5.5 1.2 L10.5 1.2 L10.5 3.5 L11.5 3.5 L13.5 5.5 L13.5 11 Z" fill="#b9b9b9"/><rect x="122" y="20" width="1" height="11" fill="#3a3a3a"/><rect x="122" y="17" width="16" height="1" fill="#3a3a3a"/><rect x="122" y="19" width="16" height="1" fill="#3a3a3a"/><rect x="141" y="6" width="15" height="11" fill="#efefef"/><path transform="translate(140.5,6)" d="M2.5 11 L2.5 5.5 L4.5 3.5 L5.5 3.5 L5.5 1.2 L10.5 1.2 L10.5 3.5 L11.5 3.5 L13.5 5.5 L13.5 11 Z" fill="#b9b9b9"/><rect x="140" y="6" width="1" height="11" fill="#3a3a3a"/><rect x="141" y="20" width="15" height="11" fill="#efefef"/><path transform="translate(140.5,20)" d="M2.5 11 L2.5 5.5 L4.5 3.5 L5.5 3.5 L5.5 1.2 L10.5 1.2 L10.5 3.5 L11.5 3.5 L13.5 5.5 L13.5 11 Z" fill="#b9b9b9"/><rect x="140" y="20" width="1" height="11" fill="#3a3a3a"/><rect x="140" y="17" width="16" height="1" fill="#3a3a3a"/><rect x="140" y="19" width="16" height="1" fill="#3a3a3a"/><rect x="166" y="6" width="15" height="11" fill="#efefef"/><path transform="translate(165.5,6)" d="M2.5 11 L2.5 5.5 L4.5 3.5 L5.5 3.5 L5.5 1.2 L10.5 1.2 L10.5 3.5 L11.5 3.5 L13.5 5.5 L13.5 11 Z" fill="#b9b9b9"/><rect x="165" y="6" width="1" height="11" fill="#3a3a3a"/><rect x="166" y="20" width="15" height="11" fill="#efefef"/><path transform="translate(165.5,20)" d="M2.5 11 L2.5 5.5 L4.5 3.5 L5.5 3.5 L5.5 1.2 L10.5 1.2 L10.5 3.5 L11.5 3.5 L13.5 5.5 L13.5 11 Z" fill="#b9b9b9"/><rect x="165" y="20" width="1" height="11" fill="#3a3a3a"/><rect x="165" y="17" width="16" height="1" fill="#3a3a3a"/><rect x="165" y="19" width="16" height="1" fill="#3a3a3a"/><rect x="184" y="6" width="15" height="11" fill="#efefef"/><path transform="translate(183.5,6)" d="M2.5 11 L2.5 5.5 L4.5 3.5 L5.5 3.5 L5.5 1.2 L10.5 1.2 L10.5 3.5 L11.5 3.5 L13.5 5.5 L13.5 11 Z" fill="#b9b9b9"/><rect x="183" y="6" width="1" height="11" fill="#3a3a3a"/><rect x="184" y="20" width="15" height="11" fill="#efefef"/><path transform="translate(183.5,20)" d="M2.5 11 L2.5 5.5 L4.5 3.5 L5.5 3.5 L5.5 1.2 L10.5 1.2 L10.5 3.5 L11.5 3.5 L13.5 5.5 L13.5 11 Z" fill="#b9b9b9"/><rect x="183" y="20" width="1" height="11" fill="#3a3a3a"/><rect x="183" y="17" width="16" height="1" fill="#3a3a3a"/><rect x="183" y="19" width="16" height="1" fill="#3a3a3a"/><rect x="203" y="6" width="15" height="11" fill="#efefef"/><path transform="translate(202.5,6)" d="M2.5 11 L2.5 5.5 L4.5 3.5 L5.5 3.5 L5.5 1.2 L10.5 1.2 L10.5 3.5 L11.5 3.5 L13.5 5.5 L13.5 11 Z" fill="#b9b9b9"/><rect x="218" y="6" width="1" height="11" fill="#3a3a3a"/><rect x="203" y="20" width="15" height="11" fill="#efefef"/><path transform="translate(202.5,20)" d="M2.5 11 L2.5 5.5 L4.5 3.5 L5.5 3.5 L5.5 1.2 L10.5 1.2 L10.5 3.5 L11.5 3.5 L13.5 5.5 L13.5 11 Z" fill="#b9b9b9"/><rect x="218" y="20" width="1" height="11" fill="#3a3a3a"/><rect x="203" y="17" width="16" height="1" fill="#3a3a3a"/><rect x="203" y="19" width="16" height="1" fill="#3a3a3a"/><rect x="221" y="6" width="15" height="11" fill="#efefef"/><path transform="translate(220.5,6)" d="M2.5 11 L2.5 5.5 L4.5 3.5 L5.5 3.5 L5.5 1.2 L10.5 1.2 L10.5 3.5 L11.5 3.5 L13.5 5.5 L13.5 11 Z" fill="#b9b9b9"/><rect x="236" y="6" width="1" height="11" fill="#3a3a3a"/><rect x="221" y="20" width="15" height="11" fill="#efefef"/><path transform="translate(220.5,20)" d="M2.5 11 L2.5 5.5 L4.5 3.5 L5.5 3.5 L5.5 1.2 L10.5 1.2 L10.5 3.5 L11.5 3.5 L13.5 5.5 L13.5 11 Z" fill="#b9b9b9"/><rect x="236" y="20" width="1" height="11" fill="#3a3a3a"/><rect x="221" y="17" width="16" height="1" fill="#3a3a3a"/><rect x="221" y="19" width="16" height="1" fill="#3a3a3a"/></svg>
<div style="left:982px;top:671px;width:91px;height:39px;background:#1c1c1c;"></div>
<div style="left:983px;top:672px;width:89px;height:18px;background:#c0c0c0;"></div>
<div style="left:983px;top:691px;width:89px;height:18px;background:#e4e4e4;"></div>
<div style="left:983px;top:673px;width:89px;height:18px;line-height:18px;font-size:10px;color:#000018;text-align:center;white-space:nowrap;font-weight:bold;">Name</div>
<div style="left:983px;top:692px;width:89px;height:18px;line-height:18px;font-size:10px;color:#000018;text-align:center;white-space:nowrap;">IP</div>
<div style="left:1073px;top:672px;width:241px;height:37px;background:#e1e1e1;"></div>
<svg style="left:1073px;top:672px" width="241" height="37" viewBox="0 0 241 37" shape-rendering="crispEdges"><rect x="7" y="7" width="15" height="10" fill="#efefef"/><path transform="translate(6.5,6)" d="M2.5 11 L2.5 5.5 L4.5 3.5 L5.5 3.5 L5.5 1.2 L10.5 1.2 L10.5 3.5 L11.5 3.5 L13.5 5.5 L13.5 11 Z" fill="#b9b9b9"/><rect x="6" y="7" width="1" height="10" fill="#3a3a3a"/><rect x="7" y="20" width="15" height="11" fill="#efefef"/><path transform="translate(6.5,20)" d="M2.5 11 L2.5 5.5 L4.5 3.5 L5.5 3.5 L5.5 1.2 L10.5 1.2 L10.5 3.5 L11.5 3.5 L13.5 5.5 L13.5 11 Z" fill="#b9b9b9"/><rect x="6" y="20" width="1" height="11" fill="#3a3a3a"/><rect x="6" y="19" width="16" height="1" fill="#3a3a3a"/><rect x="6" y="31" width="16" height="1" fill="#3a3a3a"/><rect x="25" y="7" width="15" height="10" fill="#efefef"/><path transform="translate(24.5,6)" d="M2.5 11 L2.5 5.5 L4.5 3.5 L5.5 3.5 L5.5 1.2 L10.5 1.2 L10.5 3.5 L11.5 3.5 L13.5 5.5 L13.5 11 Z" fill="#b9b9b9"/><rect x="24" y="7" width="1" height="10" fill="#3a3a3a"/><rect x="25" y="20" width="15" height="11" fill="#efefef"/><path transform="translate(24.5,20)" d="M2.5 11 L2.5 5.5 L4.5 3.5 L5.5 3.5 L5.5 1.2 L10.5 1.2 L10.5 3.5 L11.5 3.5 L13.5 5.5 L13.5 11 Z" fill="#b9b9b9"/><rect x="24" y="20" width="1" height="11" fill="#3a3a3a"/><rect x="24" y="19" width="16" height="1" fill="#3a3a3a"/><rect x="24" y="31" width="16" height="1" fill="#3a3a3a"/><rect x="45" y="7" width="15" height="10" fill="#efefef"/><path transform="translate(44.5,6)" d="M2.5 11 L2.5 5.5 L4.5 3.5 L5.5 3.5 L5.5 1.2 L10.5 1.2 L10.5 3.5 L11.5 3.5 L13.5 5.5 L13.5 11 Z" fill="#b9b9b9"/><rect x="60" y="7" width="1" height="10" fill="#3a3a3a"/><rect x="45" y="20" width="15" height="11" fill="#efefef"/><path transform="translate(44.5,20)" d="M2.5 11 L2.5 5.5 L4.5 3.5 L5.5 3.5 L5.5 1.2 L10.5 1.2 L10.5 3.5 L11.5 3.5 L13.5 5.5 L13.5 11 Z" fill="#b9b9b9"/><rect x="60" y="20" width="1" height="11" fill="#3a3a3a"/><rect x="45" y="19" width="16" height="1" fill="#3a3a3a"/><rect x="45" y="31" width="16" height="1" fill="#3a3a3a"/><rect x="62" y="7" width="15" height="10" fill="#efefef"/><path transform="translate(61.5,6)" d="M2.5 11 L2.5 5.5 L4.5 3.5 L5.5 3.5 L5.5 1.2 L10.5 1.2 L10.5 3.5 L11.5 3.5 L13.5 5.5 L13.5 11 Z" fill="#b9b9b9"/><rect x="77" y="7" width="1" height="10" fill="#3a3a3a"/><rect x="62" y="20" width="15" height="11" fill="#efefef"/><path transform="translate(61.5,20)" d="M2.5 11 L2.5 5.5 L4.5 3.5 L5.5 3.5 L5.5 1.2 L10.5 1.2 L10.5 3.5 L11.5 3.5 L13.5 5.5 L13.5 11 Z" fill="#b9b9b9"/><rect x="77" y="20" width="1" height="11" fill="#3a3a3a"/><rect x="62" y="19" width="16" height="1" fill="#3a3a3a"/><rect x="62" y="31" width="16" height="1" fill="#3a3a3a"/><rect x="86" y="7" width="15" height="10" fill="#efefef"/><path transform="translate(85.5,6)" d="M2.5 11 L2.5 5.5 L4.5 3.5 L5.5 3.5 L5.5 1.2 L10.5 1.2 L10.5 3.5 L11.5 3.5 L13.5 5.5 L13.5 11 Z" fill="#b9b9b9"/><rect x="101" y="7" width="1" height="10" fill="#3a3a3a"/><rect x="86" y="20" width="15" height="11" fill="#efefef"/><path transform="translate(85.5,20)" d="M2.5 11 L2.5 5.5 L4.5 3.5 L5.5 3.5 L5.5 1.2 L10.5 1.2 L10.5 3.5 L11.5 3.5 L13.5 5.5 L13.5 11 Z" fill="#b9b9b9"/><rect x="101" y="20" width="1" height="11" fill="#3a3a3a"/><rect x="86" y="19" width="16" height="1" fill="#3a3a3a"/><rect x="86" y="31" width="16" height="1" fill="#3a3a3a"/><rect x="104" y="7" width="15" height="10" fill="#efefef"/><path transform="translate(103.5,6)" d="M2.5 11 L2.5 5.5 L4.5 3.5 L5.5 3.5 L5.5 1.2 L10.5 1.2 L10.5 3.5 L11.5 3.5 L13.5 5.5 L13.5 11 Z" fill="#b9b9b9"/><rect x="119" y="7" width="1" height="10" fill="#3a3a3a"/><rect x="104" y="20" width="15" height="11" fill="#efefef"/><path transform="translate(103.5,20)" d="M2.5 11 L2.5 5.5 L4.5 3.5 L5.5 3.5 L5.5 1.2 L10.5 1.2 L10.5 3.5 L11.5 3.5 L13.5 5.5 L13.5 11 Z" fill="#b9b9b9"/><rect x="119" y="20" width="1" height="11" fill="#3a3a3a"/><rect x="104" y="19" width="16" height="1" fill="#3a3a3a"/><rect x="104" y="31" width="16" height="1" fill="#3a3a3a"/><rect x="123" y="7" width="15" height="10" fill="#efefef"/><path transform="translate(122.5,6)" d="M2.5 11 L2.5 5.5 L4.5 3.5 L5.5 3.5 L5.5 1.2 L10.5 1.2 L10.5 3.5 L11.5 3.5 L13.5 5.5 L13.5 11 Z" fill="#b9b9b9"/><rect x="122" y="7" width="1" height="10" fill="#3a3a3a"/><rect x="123" y="20" width="15" height="11" fill="#efefef"/><path transform="translate(122.5,20)" d="M2.5 11 L2.5 5.5 L4.5 3.5 L5.5 3.5 L5.5 1.2 L10.5 1.2 L10.5 3.5 L11.5 3.5 L13.5 5.5 L13.5 11 Z" fill="#b9b9b9"/><rect x="122" y="20" width="1" height="11" fill="#3a3a3a"/><rect x="122" y="19" width="16" height="1" fill="#3a3a3a"/><rect x="122" y="31" width="16" height="1" fill="#3a3a3a"/><rect x="141" y="7" width="15" height="10" fill="#efefef"/><path transform="translate(140.5,6)" d="M2.5 11 L2.5 5.5 L4.5 3.5 L5.5 3.5 L5.5 1.2 L10.5 1.2 L10.5 3.5 L11.5 3.5 L13.5 5.5 L13.5 11 Z" fill="#b9b9b9"/><rect x="140" y="7" width="1" height="10" fill="#3a3a3a"/><rect x="141" y="20" width="15" height="11" fill="#efefef"/><path transform="translate(140.5,20)" d="M2.5 11 L2.5 5.5 L4.5 3.5 L5.5 3.5 L5.5 1.2 L10.5 1.2 L10.5 3.5 L11.5 3.5 L13.5 5.5 L13.5 11 Z" fill="#b9b9b9"/><rect x="140" y="20" width="1" height="11" fill="#3a3a3a"/><rect x="140" y="19" width="16" height="1" fill="#3a3a3a"/><rect x="140" y="31" width="16" height="1" fill="#3a3a3a"/><rect x="166" y="7" width="15" height="10" fill="#efefef"/><path transform="translate(165.5,6)" d="M2.5 11 L2.5 5.5 L4.5 3.5 L5.5 3.5 L5.5 1.2 L10.5 1.2 L10.5 3.5 L11.5 3.5 L13.5 5.5 L13.5 11 Z" fill="#b9b9b9"/><rect x="165" y="7" width="1" height="10" fill="#3a3a3a"/><rect x="166" y="20" width="15" height="11" fill="#efefef"/><path transform="translate(165.5,20)" d="M2.5 11 L2.5 5.5 L4.5 3.5 L5.5 3.5 L5.5 1.2 L10.5 1.2 L10.5 3.5 L11.5 3.5 L13.5 5.5 L13.5 11 Z" fill="#b9b9b9"/><rect x="165" y="20" width="1" height="11" fill="#3a3a3a"/><rect x="165" y="19" width="16" height="1" fill="#3a3a3a"/><rect x="165" y="31" width="16" height="1" fill="#3a3a3a"/><rect x="184" y="7" width="15" height="10" fill="#efefef"/><path transform="translate(183.5,6)" d="M2.5 11 L2.5 5.5 L4.5 3.5 L5.5 3.5 L5.5 1.2 L10.5 1.2 L10.5 3.5 L11.5 3.5 L13.5 5.5 L13.5 11 Z" fill="#b9b9b9"/><rect x="183" y="7" width="1" height="10" fill="#3a3a3a"/><rect x="184" y="20" width="15" height="11" fill="#efefef"/><path transform="translate(183.5,20)" d="M2.5 11 L2.5 5.5 L4.5 3.5 L5.5 3.5 L5.5 1.2 L10.5 1.2 L10.5 3.5 L11.5 3.5 L13.5 5.5 L13.5 11 Z" fill="#b9b9b9"/><rect x="183" y="20" width="1" height="11" fill="#3a3a3a"/><rect x="183" y="19" width="16" height="1" fill="#3a3a3a"/><rect x="183" y="31" width="16" height="1" fill="#3a3a3a"/><rect x="203" y="7" width="15" height="10" fill="#efefef"/><path transform="translate(202.5,6)" d="M2.5 11 L2.5 5.5 L4.5 3.5 L5.5 3.5 L5.5 1.2 L10.5 1.2 L10.5 3.5 L11.5 3.5 L13.5 5.5 L13.5 11 Z" fill="#b9b9b9"/><rect x="218" y="7" width="1" height="10" fill="#3a3a3a"/><rect x="203" y="20" width="15" height="11" fill="#efefef"/><path transform="translate(202.5,20)" d="M2.5 11 L2.5 5.5 L4.5 3.5 L5.5 3.5 L5.5 1.2 L10.5 1.2 L10.5 3.5 L11.5 3.5 L13.5 5.5 L13.5 11 Z" fill="#b9b9b9"/><rect x="218" y="20" width="1" height="11" fill="#3a3a3a"/><rect x="203" y="19" width="16" height="1" fill="#3a3a3a"/><rect x="203" y="31" width="16" height="1" fill="#3a3a3a"/><rect x="221" y="7" width="15" height="10" fill="#efefef"/><path transform="translate(220.5,6)" d="M2.5 11 L2.5 5.5 L4.5 3.5 L5.5 3.5 L5.5 1.2 L10.5 1.2 L10.5 3.5 L11.5 3.5 L13.5 5.5 L13.5 11 Z" fill="#b9b9b9"/><rect x="236" y="7" width="1" height="10" fill="#3a3a3a"/><rect x="221" y="20" width="15" height="11" fill="#efefef"/><path transform="translate(220.5,20)" d="M2.5 11 L2.5 5.5 L4.5 3.5 L5.5 3.5 L5.5 1.2 L10.5 1.2 L10.5 3.5 L11.5 3.5 L13.5 5.5 L13.5 11 Z" fill="#b9b9b9"/><rect x="236" y="20" width="1" height="11" fill="#3a3a3a"/><rect x="221" y="19" width="16" height="1" fill="#3a3a3a"/><rect x="221" y="31" width="16" height="1" fill="#3a3a3a"/></svg>
</body></html>
